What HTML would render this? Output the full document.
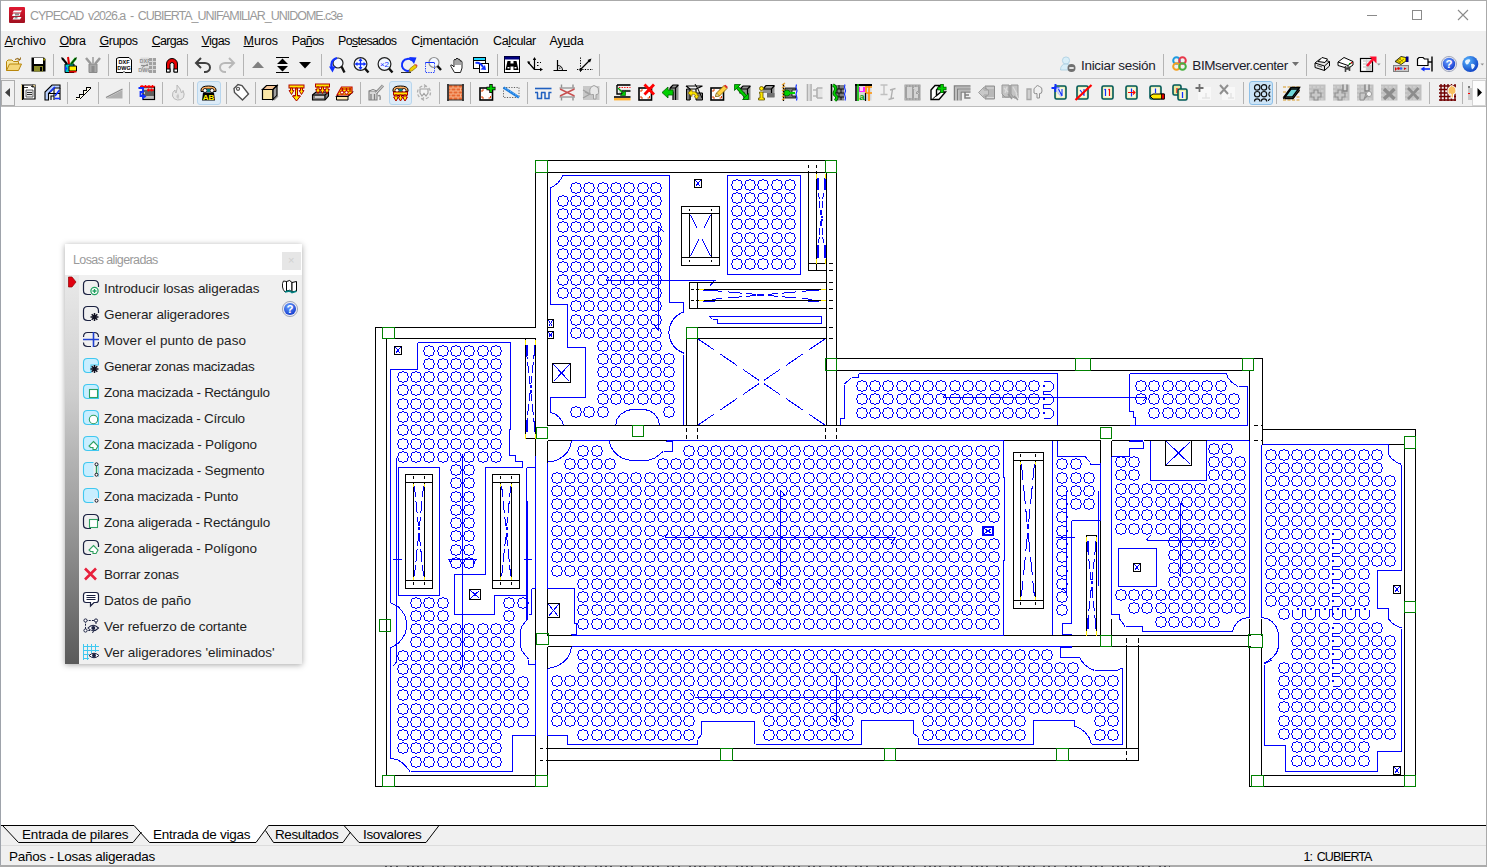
<!DOCTYPE html>
<html><head><meta charset="utf-8"><title>CYPECAD</title>
<style>
*{box-sizing:border-box;margin:0;padding:0}
html,body{width:1487px;height:867px;overflow:hidden;background:#fff}
body{font-family:"Liberation Sans",sans-serif;font-size:12px;color:#000;position:relative}
.abs{position:absolute}
#win{position:absolute;left:0;top:0;width:1487px;height:867px;background:#fff;overflow:hidden}
#bT{position:absolute;left:0;top:0;width:1487px;height:1px;background:#aaa}
#bL{position:absolute;left:0;top:0;width:1px;height:867px;background:#9ea3ab}
#bR{position:absolute;left:1486px;top:0;width:1px;height:867px;background:#aaa}
#title{position:absolute;left:1px;top:1px;width:1485px;height:30px;background:#fff}
#title .cap{position:absolute;left:29px;top:7px;font-size:12px;color:#999;white-space:nowrap;letter-spacing:-0.35px}
#menu{position:absolute;left:1px;top:31px;width:1485px;height:21px;background:#f0f0f0}
#menu span{position:absolute;top:3px;font-size:12.5px;white-space:nowrap;color:#000}
#menu u{text-decoration:underline;text-underline-offset:1px}
#tb1{position:absolute;left:1px;top:52px;width:1485px;height:27px;background:#f0f0f0;border-bottom:1px solid #c8c8c8}
#tb2{position:absolute;left:1px;top:79px;width:1485px;height:28px;background:#f0f0f0;border-bottom:1px solid #bcbcbc}
.sep{position:absolute;width:1px;background:#b4b4b4}
.ic{position:absolute;width:20px;height:20px;overflow:visible}
.hl{position:absolute;background:#dcebf7;border:1px solid #b8d6ee;border-radius:3px}
#canvas{position:absolute;left:1px;top:107px;width:1485px;height:718px;background:#fff}
#tabs{position:absolute;left:1px;top:825px;width:1485px;height:20px;background:#f0f0f0}
#status{position:absolute;left:1px;top:845px;width:1485px;height:20px;background:#f0f0f0}
#status span{position:absolute;top:4px;font-size:12.5px;white-space:nowrap}
#panel{position:absolute;left:65px;top:244px;width:237px;height:420px;background:#f0f0f0;box-shadow:0 1px 6px rgba(0,0,0,.35)}
#panel .ph{position:absolute;left:0;top:0;width:237px;height:31px;background:#fff}
#panel .ph span{position:absolute;left:8px;top:8px;font-size:12px;color:#9a9a9a;letter-spacing:-0.3px}
#panel .grip{position:absolute;left:0;top:31px;width:14px;height:389px;background:linear-gradient(#e9e9e9,#cfcfcf 30%,#8f8f8f 70%,#5a5a5a)}
#panel .it{position:absolute;left:39px;font-size:13px;color:#1a1a1a;white-space:nowrap;letter-spacing:-0.1px}
</style></head><body><div id="win">

<div id="bT"></div><div id="bL"></div><div id="bR"></div>
<div id="title"></div>
<span class="abs" style="left:30.0px;top:9.5px;font-size:12.5px;letter-spacing:-1.02px;color:#9a9a9a;white-space:nowrap;line-height:1;word-spacing:2.2px;">CYPECAD v2026.a - CUBIERTA_UNIFAMILIAR_UNIDOME.c3e</span>
<div id="menu"></div>
<span class="abs" style="left:4.5px;top:34.5px;font-size:12.5px;letter-spacing:-0.03px;color:#000;white-space:nowrap;line-height:1;"><u>A</u>rchivo</span>
<span class="abs" style="left:59.5px;top:34.5px;font-size:12.5px;letter-spacing:-0.45px;color:#000;white-space:nowrap;line-height:1;"><u>O</u>bra</span>
<span class="abs" style="left:99.5px;top:34.5px;font-size:12.5px;letter-spacing:-0.49px;color:#000;white-space:nowrap;line-height:1;"><u>G</u>rupos</span>
<span class="abs" style="left:151.8px;top:34.5px;font-size:12.5px;letter-spacing:-0.74px;color:#000;white-space:nowrap;line-height:1;"><u>C</u>argas</span>
<span class="abs" style="left:201.5px;top:34.5px;font-size:12.5px;letter-spacing:-0.56px;color:#000;white-space:nowrap;line-height:1;"><u>V</u>igas</span>
<span class="abs" style="left:243.5px;top:34.5px;font-size:12.5px;letter-spacing:-0.05px;color:#000;white-space:nowrap;line-height:1;"><u>M</u>uros</span>
<span class="abs" style="left:291.8px;top:34.5px;font-size:12.5px;letter-spacing:-0.72px;color:#000;white-space:nowrap;line-height:1;">Pa<u>ñ</u>os</span>
<span class="abs" style="left:338.0px;top:34.5px;font-size:12.5px;letter-spacing:-0.69px;color:#000;white-space:nowrap;line-height:1;">Po<u>s</u>tesados</span>
<span class="abs" style="left:411.2px;top:34.5px;font-size:12.5px;letter-spacing:-0.22px;color:#000;white-space:nowrap;line-height:1;">C<u>i</u>mentación</span>
<span class="abs" style="left:493.0px;top:34.5px;font-size:12.5px;letter-spacing:-0.38px;color:#000;white-space:nowrap;line-height:1;">Ca<u>l</u>cular</span>
<span class="abs" style="left:549.5px;top:34.5px;font-size:12.5px;letter-spacing:-0.29px;color:#000;white-space:nowrap;line-height:1;">Ay<u>u</u>da</span>
<div id="tb1"></div><div id="tb2"></div>
<div class="sep" style="left:53px;top:54px;height:22px"></div>
<div class="sep" style="left:108px;top:54px;height:22px"></div>
<div class="sep" style="left:187px;top:54px;height:22px"></div>
<div class="sep" style="left:243px;top:54px;height:22px"></div>
<div class="sep" style="left:321px;top:54px;height:22px"></div>
<div class="sep" style="left:497px;top:54px;height:22px"></div>
<div class="sep" style="left:599px;top:54px;height:22px"></div>
<div class="sep" style="left:1163px;top:54px;height:22px"></div>
<div class="sep" style="left:1306px;top:54px;height:22px"></div>
<div class="sep" style="left:1385px;top:54px;height:22px"></div>
<div class="sep" style="left:67px;top:82px;height:22px"></div>
<div class="sep" style="left:98px;top:82px;height:22px"></div>
<div class="sep" style="left:129px;top:82px;height:22px"></div>
<div class="sep" style="left:162px;top:82px;height:22px"></div>
<div class="sep" style="left:193px;top:82px;height:22px"></div>
<div class="sep" style="left:226px;top:82px;height:22px"></div>
<div class="sep" style="left:255px;top:82px;height:22px"></div>
<div class="sep" style="left:360px;top:82px;height:22px"></div>
<div class="sep" style="left:439px;top:82px;height:22px"></div>
<div class="sep" style="left:470px;top:82px;height:22px"></div>
<div class="sep" style="left:527px;top:82px;height:22px"></div>
<div class="sep" style="left:606px;top:82px;height:22px"></div>
<div class="sep" style="left:1243px;top:82px;height:22px"></div>
<div class="sep" style="left:1276px;top:82px;height:22px"></div>
<div class="sep" style="left:1429px;top:82px;height:22px"></div>
<div class="sep" style="left:1462px;top:82px;height:22px"></div>
<div class="hl" style="left:197px;top:81px;width:24px;height:24px;background:#dcebf7;border-color:#b8d6ee"></div>
<div class="hl" style="left:389px;top:81px;width:23px;height:24px;background:#dcebf7;border-color:#b8d6ee"></div>
<div class="hl" style="left:1249px;top:81px;width:24px;height:24px;background:#cce4f7;border-color:#8ec0e8"></div>
<div class="abs" style="left:1px;top:80px;width:14px;height:26px;background:#f1f1f1;border:1px solid #adadad"></div>
<div class="abs" style="left:1472px;top:80px;width:14px;height:26px;background:#fdfdfd;border:1px solid #d4d4d4"></div>
<span class="abs" style="left:1081.0px;top:58.5px;font-size:13.5px;letter-spacing:-0.31px;color:#1c1c2c;white-space:nowrap;line-height:1;">Iniciar sesión</span>
<span class="abs" style="left:1192.3px;top:58.5px;font-size:13.5px;letter-spacing:-0.41px;color:#1c1c2c;white-space:nowrap;line-height:1;">BIMserver.center</span>
<div id="canvas"></div>
<svg class="abs" style="left:0;top:0" width="1487" height="110" viewBox="0 0 1487 110" fill="none"><g transform="translate(6,57)" ><path d="M0.5 13.5 L0.5 4.5 L2 3 L6 3 L7.5 4.5 L12.5 4.5 L12.5 7" fill="#f7e7a0" stroke="#b8860b"/><path d="M0.5 13.5 L3.5 7 L15.5 7 L12.5 13.5 Z" fill="#f4d77a" stroke="#b8860b"/><path d="M9 2.5 Q12 0 14 3 M14 3 L14.5 0.5 M14 3 L11.5 3" fill="none" stroke="#8b5a00"/></g>
<g transform="translate(31,57)" ><path d="M0.5 0.5 H13 L14.5 2 V14.5 H0.5 Z" fill="#000"/><rect x="3" y="1" width="9" height="6" fill="#fff"/><rect x="3" y="9" width="9" height="5.5" fill="#8c8c2a"/><rect x="9" y="10" width="2" height="4" fill="#000"/><rect x="12.5" y="1.5" width="1.2" height="2" fill="#e8e000"/></g>
<g transform="translate(61,57)" ><path d="M4 7 H13 V15.5 H4 Z" fill="#00c8c8" stroke="#000"/><path d="M8 9 H15.5 V14 H8 Z" fill="#ffee00" stroke="#000"/><path d="M8 14 H15.5 V15.5 H8Z" fill="#e00000"/><path d="M1 1 L6 7" stroke="#000" stroke-width="2"/><path d="M7 0 L8 7" stroke="#e00000" stroke-width="2"/><path d="M15 1 L10 7" stroke="#00a000" stroke-width="2.5"/><path d="M0.5 0.5 L5.5 6.5 M15.5 0.5 L10.5 6.5" stroke="#000" fill="none"/><path d="M4 9 L6.5 11.5 L4 14Z" fill="#1030ff"/></g>
<g transform="translate(85,57)" ><path d="M4 7 H12 V15.5 H4 Z" fill="#a8a8a8" stroke="#8a8a8a"/><path d="M1 1 L6 7 M15 1 L10 7" stroke="#9a9a9a" stroke-width="2.5"/><path d="M8 0 L8 7" stroke="#b0b0b0" stroke-width="2"/><rect x="6.5" y="9" width="3" height="6" fill="#8c8c8c"/></g>
<g transform="translate(116,57)" ><path d="M0.5 1.5 L3 0.5 H13 L15.5 3 V15.5 H9 L8 14.5 L7 15.5 H0.5 Z" fill="#fff" stroke="#000"/><text x="8" y="7.3" font-family="Liberation Sans" font-weight="bold" font-size="5.5" text-anchor="middle" fill="#000" stroke="none">DXF</text><text x="8" y="12.8" font-family="Liberation Sans" font-weight="bold" font-size="5.5" text-anchor="middle" fill="#000">DWG</text></g>
<g transform="translate(140,57)" ><path d="M0.5 0.5 H9 V15.5 H0.5Z" fill="#dcdcdc" stroke="none"/><text x="5" y="6" font-family="Liberation Sans" font-weight="bold" font-size="5.5" text-anchor="middle" fill="#909090">DXF</text><text x="5" y="15" font-family="Liberation Sans" font-weight="bold" font-size="5.5" text-anchor="middle" fill="#909090">DWG</text><path d="M9 1 H16 V16 H9Z" fill="#a0a0a0"/><path d="M9 4.5 H16 M9 8.5 H16 M9 12.5 H16 M12.5 1 V16" stroke="#d8d8d8"/><path d="M1 8.5 H8 M2 10.5 L8 7" stroke="#909090"/></g>
<g transform="translate(165,57)" ><path d="M1.5 15 V7 A5.5 5.5 0 0 1 12.5 7 V15 H9 V7.5 A2 2 0 0 0 5 7.5 V15 Z" fill="#e80000" stroke="#000"/><rect x="1.5" y="12" width="3.5" height="3" fill="#fff" stroke="#000"/><rect x="9" y="12" width="3.5" height="3" fill="#fff" stroke="#000"/></g>
<g transform="translate(195,57)" ><path d="M1 6 H10 A5 4.5 0 0 1 10 15 H9" fill="none" stroke="#404040" stroke-width="2"/><path d="M6 1 L1 6 L6 11" fill="none" stroke="#404040" stroke-width="2"/></g>
<g transform="translate(219,57)" ><path d="M15 6 H6 A5 4.5 0 0 0 6 15 H7" fill="none" stroke="#b8b8b8" stroke-width="2"/><path d="M10 1 L15 6 L10 11" fill="none" stroke="#b8b8b8" stroke-width="2"/></g>
<g transform="translate(252,57)" ><path d="M0 11 L6 4.5 L12 11Z" fill="#808080"/></g>
<g transform="translate(276,57)" ><path d="M0 0.5 H13 M0 15.5 H13" stroke="#000" stroke-width="1"/><path d="M1 7 L6.5 1.5 L12 7Z M1 9 L6.5 14.5 L12 9Z" fill="#000"/></g>
<g transform="translate(299,57)" ><path d="M0 5 L6 11.5 L12 5Z" fill="#000"/></g>
<g transform="translate(329,57)" ><circle cx="9" cy="6" r="5" fill="#f4f8ff" stroke="#202020" stroke-width="1.2"/><path d="M12.5 9.5 L15.5 15.5" stroke="#101010" stroke-width="2.4"/><path d="M8 1 Q0.5 3 3 12" fill="none" stroke="#1030ff" stroke-width="2.2"/><path d="M0 9.5 L3.5 15.5 L6.5 9.5Z" fill="#1030ff"/></g>
<g transform="translate(353,57)" ><circle cx="7.5" cy="7" r="6.4" fill="#f4f8ff" stroke="#202020" stroke-width="1.2"/><path d="M11.98 11.48 L15.5 15.5" stroke="#101010" stroke-width="2.4"/><path d="M7.5 2.5 V11.5 M3 7 H12" stroke="#1030ff" stroke-width="1.3"/><path d="M7.5 1 L5.5 4 H9.5Z M7.5 13 L5.5 10 H9.5Z M1.5 7 L4.5 5 V9Z M13.5 7 L10.5 5 V9Z" fill="#1030ff"/></g>
<g transform="translate(377,57)" ><circle cx="7.5" cy="7" r="6.4" fill="#f4f8ff" stroke="#202020" stroke-width="1.2"/><path d="M11.98 11.48 L15.5 15.5" stroke="#101010" stroke-width="2.4"/><text x="7.5" y="9.8" font-family="Liberation Sans" font-size="8" text-anchor="middle" fill="#1030ff">×2</text></g>
<g transform="translate(401,57)" ><path d="M11 3.5 A6 6 0 1 0 12.5 10" fill="none" stroke="#1030ff" stroke-width="2"/><path d="M8 0 L15.5 0.5 L13 7Z" fill="#1030ff"/><path d="M0 15.5 H10" stroke="#303030"/><path d="M8 14.5 L9 11.5 L14 7.5 L16 10 L11 14 Z" fill="#f0d000" stroke="#806000" stroke-width=".6"/><path d="M14 7.5 L16 10 L16.5 8.5 L15 7Z" fill="#e04040"/></g>
<g transform="translate(425,57)" ><circle cx="9" cy="5.5" r="5" fill="#f4f8ff" stroke="#909090" stroke-width="1.2"/><path d="M12.5 9 L16 13" stroke="#101010" stroke-width="2.4"/><path d="M0.5 5.5 H9.5 V15.5 H0.5Z" fill="none" stroke="#1030ff" stroke-dasharray="1.2 1.2"/><path d="M0.5 5.5 H9.5" stroke="#1030ff"/></g>
<g transform="translate(450,57)" ><path d="M4.5 15.5 L1 9.5 Q0 7.5 2 8 L4 10 V3 Q5 1.5 6 3 V2 Q7 0 8 2 V2.5 Q9.2 1 10 3 V4 Q11.5 3 12 5 V11 L10.5 15.5Z" fill="#fff" stroke="#202020" stroke-width="1"/><path d="M6 3 V8 M8 2.5 V8 M10 3.5 V8" stroke="#202020" stroke-width=".8"/></g>
<g transform="translate(473,57)" ><rect x="0.5" y="0.5" width="12" height="11" fill="#fff" stroke="#000"/><rect x="0.5" y="0.5" width="12" height="3" fill="#20d8ff" stroke="#000"/><rect x="6.5" y="6.5" width="9" height="9" fill="#fff" stroke="#000"/><path d="M2.5 6 Q7 5 10 10" fill="none" stroke="#1030ff" stroke-width="2"/><path d="M7.5 12.5 L13 13 L12 8Z" fill="#1030ff"/></g>
<g transform="translate(504,56)" ><rect x="0.5" y="0.5" width="15" height="16" fill="#fff" stroke="#000"/><rect x="0.5" y="0.5" width="15" height="3" fill="#000080"/><path d="M3.5 5 H6.5 V7.5 H9.5 V5 H12.5 L14.5 14 H9.5 V10.5 H6.5 V14 H1.5Z" fill="#000"/><rect x="3.5" y="11" width="2" height="1.5" fill="#fff"/><rect x="10.5" y="11" width="2" height="1.5" fill="#fff"/></g>
<g transform="translate(527,57)" ><path d="M7.5 1.5 V12.5 H15 M7.5 12.5 L1 5" fill="none" stroke="#000" stroke-width="1.2"/><path d="M7.5 0 L5.8 3 H9.2Z M16 12.5 L13 10.8 V14.2Z M0.3 4.2 L3.4 4.8 L1.4 7.2Z" fill="#000"/><path d="M10 5.5 H14 M10 8.5 L13 8.5" stroke="#000" stroke-dasharray="1.5 1.5"/></g>
<g transform="translate(553,57)" ><path d="M0.5 13.5 H14 M4.5 3 V13.5" stroke="#000" stroke-width="1.2" fill="none"/><path d="M4.5 8.5 Q9.5 8.5 9.5 13.5" fill="none" stroke="#000"/><rect x="6.2" y="10.5" width="1.2" height="1.2" fill="#000"/></g>
<g transform="translate(577,57)" ><path d="M3.5 0.5 V16 M0 12.5 H16" stroke="#000" stroke-dasharray="1.3 1.3"/><path d="M3.5 12.5 L13 3" stroke="#000" stroke-width="1.2"/><path d="M14.5 1.5 L10.5 3 L13 5.5Z" fill="#000"/><rect x="2.5" y="11.5" width="2.4" height="2.4" fill="#000"/></g>
<g transform="translate(1060,56)" ><circle cx="6" cy="4.5" r="3.6" fill="#d8eef8" stroke="#a8cde0" stroke-width=".8"/><path d="M0.5 14 Q0.5 8 6 8 Q11.5 8 11.5 14Z" fill="#d8eef8" stroke="#a8cde0" stroke-width=".8"/><circle cx="11.5" cy="12" r="4" fill="#707070"/><rect x="9.3" y="11.2" width="4.4" height="1.6" fill="#fff"/></g>
<g transform="translate(1172,56)" ><g fill="none" stroke-width="2"><circle cx="4.5" cy="4.5" r="3.3" stroke="#1e9be0"/><circle cx="10.5" cy="4.5" r="3.3" stroke="#e8384a"/><circle cx="4.5" cy="10.5" r="3.3" stroke="#f4a020"/><circle cx="10.5" cy="10.5" r="3.3" stroke="#48b040"/></g></g>
<g transform="translate(1292,62)" ><path d="M0 0 H7 L3.5 4Z" fill="#707070"/></g>
<g transform="translate(1314,56)" ><path d="M1 7 L6 3 L15.5 5.5 L15.5 10 L10.5 14.5 L1 11.5Z" fill="#e8e8e8" stroke="#000"/><path d="M4 5.5 L8 1.5 L13.5 3 L11 6.5Z" fill="#fff" stroke="#000"/><path d="M1 7 L10.5 10 L15.5 5.5 M10.5 10 V14.5" fill="none" stroke="#000"/><path d="M3 9.5 L8 11" stroke="#606060"/></g>
<g transform="translate(1337,56)" ><path d="M1 6 L7 1.5 L16 5.5 L16 9 L11 12.5 L1 9.5Z" fill="#fff" stroke="#000"/><path d="M1 6 L11 9.5 L16 5.5 M11 9.5 V12.5" fill="none" stroke="#000"/><path d="M8.5 10 V16 M12.5 10.5 V15 M8.5 13 H12.5" stroke="#404040" stroke-width="1.6"/><rect x="12" y="7" width="1.5" height="1.5" fill="#00b000"/><rect x="13.8" y="6" width="1.5" height="1.5" fill="#e00000"/></g>
<g transform="translate(1360,56)" ><rect x="0.5" y="2.5" width="12" height="13" fill="#fff" stroke="#000" stroke-width="1.2"/><path d="M3 5 H10 M3 8 H10 M3 11 H10 M6.5 3 V15" stroke="#d0d0d0" stroke-width="1.4"/><rect x="6.5" y="9" width="5" height="6" fill="#c8c8c8"/><path d="M7 10 L14 2" stroke="#ff1030" stroke-width="2.6"/><path d="M9.5 0.5 H16.5 V7.5Z" fill="#ff1030"/></g>
<g transform="translate(1377,63.5)" ><path d="M0 0 H3.6 L1.8 2Z" fill="#909090"/></g>
<g transform="translate(1393,56)" ><rect x="0.5" y="9.5" width="15" height="6" fill="#c8c8c8" stroke="#808080"/><path d="M2 11 l2 2 l-2 2Z" fill="#e00000"/><circle cx="8" cy="12.5" r="1.3" fill="#3060ff"/><circle cx="5.5" cy="12.5" r="1.3" fill="#e00000"/><path d="M11 11.5 l2.5 1 l-2.5 1.5Z" fill="#e00000"/><path d="M2 5.5 L8 0.5 L13 1.5 L13 5 L8 8.5 Z" fill="#fff000" stroke="#000" stroke-width=".8"/><path d="M4 4 L8 7 M6 2.5 L10 5.5 M3 6 L8 2 M5.5 7 L11 3" stroke="#806000" stroke-width=".7"/><rect x="13" y="0.5" width="2.5" height="5.5" fill="#000080"/></g>
<g transform="translate(1417,56)" ><path d="M0.5 9.5 V3 L2 1.5 H6 L7.5 3 H11 V9.5Z" fill="#fff" stroke="#000" stroke-width="1.2"/><path d="M15 0.5 V15.5" stroke="#000" stroke-width="1.4"/><path d="M11 6 H15" stroke="#000" stroke-width="1.4"/><path d="M5 13 H13" stroke="#1030ff" stroke-width="1.6"/><path d="M3.5 13 L7.5 10.5 V15.5Z" fill="#1030ff"/></g>
<g transform="translate(1441,56)" ><defs><radialGradient id="hg" cx=".4" cy=".3" r=".8"><stop offset="0" stop-color="#6aa0ff"/><stop offset="1" stop-color="#0a30c8"/></radialGradient></defs><circle cx="8" cy="8" r="7.6" fill="#e8e8f0" stroke="#9098b0" stroke-width=".8"/><circle cx="8" cy="8" r="6.2" fill="url(#hg)"/><text x="8" y="12.2" font-family="Liberation Sans" font-weight="bold" font-size="11.5" text-anchor="middle" fill="#fff">?</text></g>
<g transform="translate(1462,56)" ><defs><radialGradient id="gg" cx=".35" cy=".3" r=".8"><stop offset="0" stop-color="#58b8ff"/><stop offset="1" stop-color="#0838c0"/></radialGradient></defs><circle cx="8.3" cy="8" r="8" fill="url(#gg)"/><path d="M3 5 Q5 2.5 8 3.5 Q9 5 7 6.5 Q6.5 9 4.5 8.5 Q3 7 3 5Z M9 8 Q12 7 13 9.5 Q12 13 10 13.5 Q9 11 9 8Z" fill="#e8f4ff"/></g>
<g transform="translate(1480.5,63.5)" ><path d="M0 0 H3.6 L1.8 2Z" fill="#909090"/></g>
<g transform="translate(5,88)" ><path d="M5 0 V9 L0 4.5Z" fill="#404040"/></g>
<g transform="translate(1477.5,88)" ><path d="M0 0 L4.5 4.5 L0 9Z" fill="#000"/></g>
<g transform="translate(20,84)" ><path d="M3.5 1 H15 V15 H3.5Z" fill="#fff" stroke="#000" stroke-width="1.2"/><path d="M2 0.5 V16" stroke="#000" stroke-width="2"/><path d="M1.5 0.5 V16" stroke="#f0d890" stroke-width="1"/><path d="M6 6 H13 V13 H6Z" fill="#e8e8e8" stroke="#404040" stroke-width=".8"/><path d="M7 8.5 H12 M7 10.5 H12" stroke="#000" stroke-width=".8"/><path d="M3.5 3.5 H8 M13 0.5 V4 M11 2.5 H15" stroke="#000" stroke-width=".8"/><path d="M13.5 1 L15 2.5" stroke="#f0d890" stroke-width="1.5"/></g>
<g transform="translate(44,84)" ><path d="M1 16 V8 L8 1 H16 V4 H10 L4.5 9.5 V16Z" fill="#b8d0ff" stroke="#000" stroke-width="1.1"/><path d="M4.5 9.5 H16 M10 4 V16 M16 4 V16 M7 16 V12 H10" fill="none" stroke="#000" stroke-width="1.1"/><path d="M6 8 L11 3 M11 12 L15.5 6" stroke="#1030ff" stroke-width="1.6"/><path d="M10.5 14.5 H16" stroke="#1030ff" stroke-width="1.6"/></g>
<g transform="translate(75,84)"  shape-rendering="crispEdges"><path d="M0.5 15.5 V13.5 H4.5 V10 H8 V6.5 H11.5 V3 H15.5 V4.5 L4.5 15.5Z" fill="#fffbe8" stroke="none"/><path d="M0.5 15 H2 M0.5 13.5 H4.5 V10 H8 V6.5 H11.5 V3 H15.5 M4.5 15.5 L15.5 4.5" fill="none" stroke="#000" stroke-width="1"/></g>
<g transform="translate(106,84)" ><path d="M0 14.5 L16.5 6 V14.5Z" fill="#b0b0b0"/><path d="M0 13.5 L16.5 5" stroke="#888" stroke-width="1.3"/></g>
<g transform="translate(138,84)" ><rect x="5" y="3" width="11.5" height="12.5" fill="#c0c0c0" stroke="#000" stroke-width="1.2"/><path d="M5 7 H16.5 M5 11 H16.5" stroke="#000" stroke-width="1.2"/><rect x="7" y="8" width="9" height="2.4" fill="#606060"/><path d="M2 2.5 H16.5 M9 6 H16" stroke="#ff0000" stroke-width="1.3"/><path d="M4 1 V4 M7.5 1 V4 M11 1 V4 M14.5 1 V4 M10.5 4.5 V7.5 M13.5 4.5 V7.5" stroke="#ff0000" stroke-width="1.2"/><path d="M0.5 4 H5 V8 H2.5 V12 H5" fill="none" stroke="#1030ff" stroke-width="1.8"/><path d="M4 9.5 L8.5 12.5 L4 15.5Z" fill="#1030ff"/></g>
<g transform="translate(171,84)" ><path d="M6 1 Q10 5 10.5 9 Q12 8 12 6.5 Q14 10 12.5 13.5 Q10 16.5 6.5 16 Q2.5 15.5 1.5 12 Q1 8 4 6 Q4 8 5 9 Q6.5 5 6 1Z" fill="#e8e8e8" stroke="#b8b8b8" stroke-width="1"/><path d="M7 9 Q9 12 7.5 15 Q5 14 5.5 11.5 Q6.5 11 7 9Z" fill="#c8c8c8"/></g>
<g transform="translate(200,84)" ><path d="M1 6 Q1 2 8.5 2 Q16 2 16 6 L16 7.5 L12 7.5 L11.5 5 H5.5 L5 7.5 L1 7.5Z" fill="#ffb060" stroke="#000" stroke-width="1"/><circle cx="5" cy="6.5" r="2" fill="#fff" stroke="#000" stroke-width=".8"/><circle cx="12" cy="6.5" r="2" fill="#fff" stroke="#000" stroke-width=".8"/><path d="M7 5 H10 V8 H7Z" fill="#008080"/><path d="M3 8.5 H14 L15 16.5 H2Z" fill="#000"/><text x="8.5" y="15.5" font-family="Liberation Sans" font-weight="bold" font-size="8" text-anchor="middle" fill="#fff000">AB</text></g>
<g transform="translate(233,84)" ><path d="M1 4.5 L5 0.5 L9 1.5 L15.5 10 L9.5 16 L1.5 8.5Z" fill="#fff" stroke="#505050" stroke-width="1.4"/><circle cx="5" cy="4.8" r="1.6" fill="#f0f0f0" stroke="#505050" stroke-width="1.1"/></g>
<g transform="translate(262,84)" ><path d="M0.5 5.5 H11 V15.5 H0.5Z" fill="#fbe8a8" stroke="#000" stroke-width="1.2"/><path d="M0.5 5.5 L4.5 1.5 H15 L11 5.5Z" fill="#f8c898" stroke="#000" stroke-width="1.2"/><path d="M11 5.5 L15 1.5 V11.5 L11 15.5Z" fill="#a0a0a0" stroke="#000" stroke-width="1.2"/><path d="M12 16 L16 12" stroke="#909090" stroke-width="1.2"/></g>
<g transform="translate(288,84)" ><rect x="1.0" y="1.0" width="15.0" height="3" fill="#ffe800" stroke="#b00000" stroke-width="1"/><path d="M2.5 4.0 V6.5 H1.1 L3.5 10.5 L5.9 6.5 H4.5 V4.0 Z" fill="#ffe800" stroke="#b00000" stroke-width="1"/><path d="M7.5 4.0 V11.5 H5.3 L8.5 15.5 L11.7 11.5 H9.5 V4.0 Z" fill="#ffe800" stroke="#b00000" stroke-width="1"/><path d="M12.5 4.0 V6.5 H11.1 L13.5 10.5 L15.9 6.5 H14.5 V4.0 Z" fill="#ffe800" stroke="#b00000" stroke-width="1"/><path d="M7.5 5 V12 H4.5 L8.5 17 L12.5 12 H9.5 V5Z" fill="#ffe800" stroke="#b00000"/></g>
<g transform="translate(312,84)" ><path d="M0.5 11 L4 8 H16.5 V12 L13 16 H0.5Z" fill="#808080" stroke="#000" stroke-width="1.1"/><path d="M0.5 11 H13 L16.5 8 M13 11 V16" fill="none" stroke="#000" stroke-width="1.1"/><path d="M3 13 H12" stroke="#d0d0d0" stroke-width="2"/><rect x="3.5" y="0.0" width="14.0" height="3" fill="#ffe800" stroke="#b00000" stroke-width="1"/><path d="M5.0 3.0 V5.5 H3.6 L6.0 9.5 L8.4 5.5 H7.0 V3.0 Z" fill="#ffe800" stroke="#b00000" stroke-width="1"/><path d="M9.5 3.0 V5.5 H8.1 L10.5 9.5 L12.9 5.5 H11.5 V3.0 Z" fill="#ffe800" stroke="#b00000" stroke-width="1"/><path d="M14.0 3.0 V5.5 H12.6 L15.0 9.5 L17.4 5.5 H16.0 V3.0 Z" fill="#ffe800" stroke="#b00000" stroke-width="1"/></g>
<g transform="translate(336,84)" ><path d="M0.5 12.5 L5 8 H16.5 L12 12.5Z" fill="#d8d8d8" stroke="#000" stroke-width="1.1"/><path d="M0.5 12.5 H12 V16 H0.5Z" fill="#ffe8b0" stroke="#000" stroke-width="1"/><path d="M1 11 L5.5 3 H16 V9 L12 11Z" fill="#ffe800" stroke="#c00000" stroke-width="1.2"/><path d="M5 5 H15 M3.5 8 H13" stroke="#c00000" stroke-width="1.2"/><path d="M6.5 4 V10 M10.5 4 V10 M14 3.5 V8" stroke="#c00000" stroke-width="1.3"/><circle cx="6" cy="8.5" r="1.6" fill="#fff" stroke="#c00000"/><circle cx="10.5" cy="8.5" r="1.6" fill="#fff" stroke="#c00000"/></g>
<g transform="translate(367,84)" ><path d="M2 7 H10 V16 H2Z" fill="#d8d8d8" stroke="#808080" stroke-width="1.1"/><path d="M2 7 Q6 4 10 7" fill="#e8e8e8" stroke="#808080"/><path d="M4 10 V16 M7.5 10 V16" stroke="#808080" stroke-width="1.3"/><path d="M9 9 L16 1.5" stroke="#909090" stroke-width="3"/><path d="M9 9 L16 1.5" stroke="#e0e0e0" stroke-width="1"/><path d="M11 12 Q14 10 13 16" fill="none" stroke="#909090" stroke-width="1.4"/></g>
<g transform="translate(392,84)" ><path d="M1 6 Q1 2 8.5 2 Q16 2 16 6 L16 7.5 L12 7.5 L11.5 5 H5.5 L5 7.5 L1 7.5Z" fill="#ffb060" stroke="#000" stroke-width="1"/><circle cx="5" cy="6.5" r="2" fill="#fff" stroke="#000" stroke-width=".8"/><circle cx="12" cy="6.5" r="2" fill="#fff" stroke="#000" stroke-width=".8"/><path d="M7 5 H10 V8 H7Z" fill="#008080"/><path d="M3 8.5 H14 L15 12 H2Z" fill="#000"/><rect x="1.5" y="8.0" width="14.0" height="3" fill="#ffe800" stroke="#b00000" stroke-width="1"/><path d="M3.0 11.0 V13.0 H1.6 L4.0 17.0 L6.4 13.0 H5.0 V11.0 Z" fill="#ffe800" stroke="#b00000" stroke-width="1"/><path d="M7.5 11.0 V13.0 H6.1 L8.5 17.0 L10.9 13.0 H9.5 V11.0 Z" fill="#ffe800" stroke="#b00000" stroke-width="1"/><path d="M12.0 11.0 V13.0 H10.6 L13.0 17.0 L15.4 13.0 H14.0 V11.0 Z" fill="#ffe800" stroke="#b00000" stroke-width="1"/></g>
<g transform="translate(416,84)" ><circle cx="8" cy="8.5" r="6.5" fill="none" stroke="#b0b0b0" stroke-width="1.3" stroke-dasharray="3 2"/><path d="M4 5 H12 V9 L10 12 L8 9.5 L6 12 L4 9Z" fill="#f4f4f4" stroke="#a0a0a0" stroke-width="1.1"/><path d="M8 0.5 L10 2 L8 3.5 M8 16.5 L6 15 L8 13.5" fill="none" stroke="#b0b0b0" stroke-width="1.1"/></g>
<g transform="translate(447,84)" ><rect x="1.5" y="1" width="14" height="15" fill="#e86830"/><path d="M1.5 4 H15.5 M1.5 7 H15.5 M1.5 10 H15.5 M1.5 13 H15.5" stroke="#f8b890" stroke-width=".9"/><path d="M6 1 V4 M11 1 V4 M4 4 V7 M9 4 V7 M13.5 4 V7 M6 7 V10 M11 7 V10 M4 10 V13 M9 10 V13 M13.5 10 V13 M6 13 V16 M11 13 V16" stroke="#f8b890" stroke-width=".9"/><path d="M1 0 V17 M16 0 V17" stroke="#303030" stroke-width="1.8"/><path d="M0 1 H17 M0 16 H17" stroke="#303030" stroke-width="1.2"/></g>
<g transform="translate(479,84)" ><rect x="1" y="4" width="12.5" height="12" fill="#fff" stroke="#000" stroke-width="1.6"/><path d="M3 8 V6 H5 M11.5 8 V6 H9.5 M3 12 V14 H5 M11.5 12 V14 H9.5" fill="none" stroke="#e04000" stroke-width="1"/><path d="M12 0 V9 M7.5 4.5 H16.5" stroke="#000" stroke-width="3.4"/><path d="M12 0.7 V8.3 M8.2 4.5 H15.8" stroke="#00d000" stroke-width="1.8"/></g>
<g transform="translate(503,84)" ><path d="M0.5 3.5 H16 V13.5 H0.5Z" fill="none" stroke="#606060" stroke-dasharray="1.2 1.4"/><path d="M0.5 3.5 L16 13.5" stroke="#2080e0" stroke-width="2.6"/><path d="M2 4 L16 13" stroke="#60b0ff" stroke-width="1" stroke-dasharray="1.5 1.5"/></g>
<g transform="translate(535,84)" ><path d="M0 4.5 H16.5" stroke="#2060c0" stroke-width="1.6"/><path d="M2.5 8.5 V14.5 H6.5 V8.5 M10 8.5 V14.5 H14 V8.5" fill="none" stroke="#2060c0" stroke-width="1.5"/><path d="M0 8.5 H3 M6 8.5 H10.5 M13.5 8.5 H16.5" stroke="#2060c0" stroke-width="1.5"/></g>
<g transform="translate(559,84)" ><path d="M2.5 0.5 V4 M14 0.5 V4 M2.5 13 V16.5 M14 13 V16.5" stroke="#909090" stroke-width="1.4"/><path d="M0.5 4 H16 M0.5 13 H16" stroke="#a0a0a0" stroke-width="1.4"/><path d="M1 5 L15.5 12 M15.5 5 L1 12" stroke="#c85050" stroke-width="1.4"/></g>
<g transform="translate(583,84)" ><rect x="0" y="2" width="16.5" height="14" fill="#c8c8c8"/><path d="M0 6 L7 10 L0 14 M2 8 L6 10" stroke="#a0a0a0" stroke-width="1.2" fill="none"/><path d="M7 10 Q6 4 9 2.5 Q11 0.5 13 2.5 Q16 3 15.5 7 Q16 11 13 10.5 V15 H10.5 V10.5 Q8 11 7 10Z" fill="#e8e8e8" stroke="#a0a0a0"/></g>
<g transform="translate(614,84)" ><path d="M3 1 H16.5" stroke="#000" stroke-width="1.6"/><path d="M3 1 V10 H8 V7 H16.5" fill="none" stroke="#000" stroke-width="1.4"/><path d="M5 3.5 H16.5" stroke="#ff0000" stroke-dasharray="1.3 1.3" stroke-width="1.2"/><path d="M5 5.5 H16 V6 H7 V9 H5Z" fill="#d0d0d0"/><path d="M0 13 H16.5" stroke="#000" stroke-width="1.6"/><path d="M0 15.2 H16.5" stroke="#ffb030" stroke-width="2.4"/><path d="M4 4 L10 10" stroke="#00a000" stroke-width="1.4"/><path d="M6.5 11.5 H11.5 V6.5Z" fill="#00d000" stroke="#006000" stroke-width=".7"/></g>
<g transform="translate(638,84)" ><rect x="1" y="4" width="12.5" height="12" fill="#fff" stroke="#000" stroke-width="1.6"/><path d="M3 8 V6 H5 M11.5 8 V6 H9.5 M3 12 V14 H5 M11.5 12 V14 H9.5" fill="none" stroke="#e04000" stroke-width="1"/><path d="M6.5 0.5 L16 10.5 M16 0.5 L6.5 10.5" stroke="#ff0000" stroke-width="2.8"/></g>
<g transform="translate(662,84)" ><path d="M8 4 L11 1 H16.5 V16 H11 V8 H8Z" fill="#909090"/><path d="M8 4 L11 1 H16.5 M8 4 H13.5 L16.5 1 M13.5 4 V16 M8 4 V8 H11 V16" fill="none" stroke="#000" stroke-width="1.2"/><path d="M0 8.5 L6 3 V6 H11 V11 H6 V14Z" fill="#00d000" stroke="#006000" stroke-width=".8"/></g>
<g transform="translate(686,84)" ><path d="M0 2 H16.5 M0 2 L4 5 H10 L16.5 2 M4 5 V16 M10 5 V9" fill="none" stroke="#000" stroke-width="1.2"/><path d="M0.5 5 H4 V16 H0.5Z M10 9 H16.5 V16 H10Z" fill="#808080" stroke="#000"/><path d="M9 0 L12 5 L16 14" stroke="#000" stroke-width="1"/><path d="M2 9 L6 5.5 V7.8 Q11 7 11.5 11.5 L13 11 L11 15 L8 12.5 L9.5 12 Q9 9.5 6 10.2 V12.5Z" fill="#ffe800" stroke="#806000" stroke-width=".7"/></g>
<g transform="translate(710,84)" ><rect x="1" y="4" width="12.5" height="12" fill="#fff" stroke="#000" stroke-width="1.6"/><path d="M3 8 V6 H5 M11.5 8 V6 H9.5 M3 12 V14 H5 M11.5 12 V14 H9.5" fill="none" stroke="#e04000" stroke-width="1"/><path d="M5.5 12.5 L6.5 9 L14 1.5 L17 4.5 L9.5 12 Z" fill="#ffd040" stroke="#806000" stroke-width=".8"/><path d="M14 1.5 L17 4.5 L17.8 3 L15.5 0.8Z" fill="#e02020"/><path d="M5.5 12.5 L6.5 9 L9.5 12Z" fill="#f8e8c0" stroke="#806000" stroke-width=".6"/></g>
<g transform="translate(734,84)" ><path d="M6 5 L9 2 H16.5 V16 H10 V9 H6Z" fill="#909090"/><path d="M6 5 L9 2 H16.5 M6 5 H13.5 L16.5 2 M13.5 5 V16 M6 5 V9 H10 V16" fill="none" stroke="#000" stroke-width="1.2"/><path d="M2 2 L13 14" stroke="#006000" stroke-width="3.4"/><path d="M2 2 L13 14" stroke="#00d000" stroke-width="2"/><path d="M0.5 0.5 H6.5 L0.5 6.5Z M14.5 15.5 H8.5 L14.5 9.5Z" fill="#00d000" stroke="#006000" stroke-width=".8"/></g>
<g transform="translate(758,84)" ><path d="M5 5 L8 1.5 H16.5 V13 H9 V9 H5Z" fill="#909090"/><path d="M5 5 L8 1.5 H16.5 M5 5 H13.5 L16.5 1.5 M13.5 5 V13" fill="none" stroke="#000" stroke-width="1.2"/><path d="M9 9 H16.5 V13.5 H9Z" fill="#707070"/><circle cx="3.5" cy="4.5" r="2" fill="#ffe800" stroke="#605000" stroke-width=".8"/><path d="M1.5 8 H5 V14 H6.5 V16 H0.5 V14 H2 V9.5 H1.5Z" fill="#ffe800" stroke="#605000" stroke-width=".8"/></g>
<g transform="translate(782,84)" ><path d="M1.5 0 V17" stroke="#000" stroke-width="1.2"/><path d="M0 1 L3 -1 M0 4 L3 2 M0 7 L3 5 M0 10 L3 8 M0 13 L3 11 M0 16 L3 14" stroke="#e8a030" stroke-width="1.5"/><path d="M3 4 H14 V6 H10 V12 H14 V14 H3Z" fill="#707070" stroke="#000" stroke-width=".8"/><path d="M14.5 0.5 Q13.5 3 14.5 5 Q15.5 7 14.5 8.5 Q13.5 10 14.5 12 Q15.5 14 14.5 16.5" fill="none" stroke="#1030ff" stroke-width="1.2"/><circle cx="5" cy="9" r="3" fill="#00d000" stroke="#006000" stroke-width=".8"/><path d="M7 9 H13" stroke="#00d000" stroke-width="2.2"/></g>
<g transform="translate(806,84)" ><path d="M1.5 0 V17 M5 0 V17" stroke="#b0b0b0" stroke-width="1.6"/><path d="M2.3 0 H4.2 V17 H2.3Z" fill="#d8d8d8"/><path d="M7 6 H11 M7 12 H11" stroke="#b8b8b8" stroke-width="1.4"/><path d="M11 4 H16.5 M11 14 H16.5 M11 4 V14" fill="none" stroke="#b0b0b0" stroke-width="1.6"/><rect x="12" y="5" width="4.5" height="8" fill="#e4e4e4"/></g>
<g transform="translate(830,84)" ><path d="M1.5 0 V17" stroke="#000" stroke-width="1.6"/><rect x="5" y="1" width="9" height="15.5" fill="#808080"/><path d="M5 5 H14 M5 9 H14 M5 13 H14 M9 1 V5 M7 5 V9 M11 5 V9 M9 9 V13 M7 13 V16 M11 13 V16" stroke="#000" stroke-width=".9"/><path d="M15 0.5 Q14 3 15 5 Q16 7 15 8.5 Q14 10 15 12 Q16 14 15 16.5" fill="none" stroke="#1030ff" stroke-width="1.2"/><path d="M3 1 Q7 3 5 7 Q3 10 6 12 Q8 14 5 16.5" fill="none" stroke="#006000" stroke-width="3.2"/><path d="M3 1 Q7 3 5 7 Q3 10 6 12 Q8 14 5 16.5" fill="none" stroke="#00d000" stroke-width="1.6"/></g>
<g transform="translate(855,84)" ><rect x="0.5" y="0.5" width="16" height="16" fill="#d8d8d8"/><path d="M0 1 H17" stroke="#000" stroke-width="2"/><path d="M1 0 V17" stroke="#000" stroke-width="1.6"/><rect x="4" y="3" width="6" height="5" fill="#ff20ff"/><rect x="5" y="3" width="3" height="4" fill="#ffd0ff"/><path d="M3 0 V17" stroke="#00c000" stroke-width="1.6"/><text x="7" y="15.5" font-family="Liberation Sans" font-weight="bold" font-size="9.5" text-anchor="middle" fill="#00a000">a</text><path d="M11 3 H17 M11 9 H17 M14 2 V17 M11 2 V9" stroke="#ff9000" stroke-width="1.6"/><path d="M10.5 9 V17" stroke="#000" stroke-width="1.2"/></g>
<g transform="translate(880,84)" ><path d="M0.5 1 H7.5 M4 1 V10.5 M0.5 10.5 H7.5" fill="none" stroke="#c0c0c0" stroke-width="1.4"/><path d="M10 6 L15.5 4.5 M12.5 5.5 L11 14.5 M8.5 15.5 L14 14" fill="none" stroke="#b0b0b0" stroke-width="1.4"/></g>
<g transform="translate(904,84)" ><rect x="0.5" y="0.5" width="16" height="16" fill="#a0a0a0"/><path d="M3 3 H8 V14 H3Z M10 3 H14 V7 H12 V10 H14 V14 H10Z" fill="#d4d4d4"/><path d="M0.5 2 H16.5 M0.5 15 H16.5" stroke="#b8b8b8" stroke-dasharray="1.5 1.5" stroke-width="1.4"/><path d="M9 4 L15 10" stroke="#c8c8c8"/></g>
<g transform="translate(930,84)" ><path d="M1 6 L5 1.5 H10 L6.5 6 V11.5 L11 8 H15.5 L9 15.5 H1Z" fill="#fff" stroke="#000" stroke-width="1.4"/><path d="M6.5 11.5 L2.5 15" stroke="#000" stroke-width="1"/><path d="M12 0 V9 M7.5 4.5 H16.5" stroke="#006000" stroke-width="3.6"/><path d="M12 0.7 V8.3 M8.2 4.5 H15.8" stroke="#00d000" stroke-width="2"/></g>
<g transform="translate(954,84)" ><path d="M0.5 16.5 V2 H16.5 M3.5 16.5 V5 H16.5 M7 16.5 V8 H11 M16.5 8 H11 V14 H16.5 M11 11 H15" fill="none" stroke="#808080" stroke-width="1.5"/><path d="M1.2 16.5 V2.8 H16.5 V4.3 H2.8 V16.5Z M4.3 16.5 V5.8 H16.5 V7.2 H6.3 V16.5Z" fill="#b8b8b8"/></g>
<g transform="translate(978,84)" ><path d="M7 2 H16.5 V15 H7 V12 H9 V5 H7Z" fill="#b8b8b8" stroke="#909090"/><path d="M0.5 8.5 L6 3 V6 H10.5 V11 H6 V14Z" fill="#c8c8c8" stroke="#a0a0a0"/><path d="M9 4 H16 M9 13.5 H16" stroke="#d8d8d8"/></g>
<g transform="translate(1002,84)" ><rect x="0" y="1" width="16" height="13" fill="#b0b0b0"/><path d="M0 1 V10 L3 13 H7 V1Z M9 1 V10 L12 14 H16 V1Z" fill="#c4c4c4" stroke="#989898"/><path d="M2 4 L6 8 M5 3 L3 9 M11 3 L15 10 M14 9 L16 15" stroke="#dcdcdc" stroke-width="1.2"/><path d="M6 10 L10 15 M12 12 L16 16" stroke="#989898" stroke-width="1.4"/></g>
<g transform="translate(1026,84)" ><path d="M1 5 H5 V15.5 H1Z" fill="#d0d0d0" stroke="#a8a8a8" stroke-width="1.3"/><path d="M8 9 Q7 4 10 2.5 Q11.5 0.5 13.5 2.5 Q16.5 3 16 7 Q16 10 13.5 9.5 V14 H11 V9.5 Q9 10 8 9Z" fill="#f0f0f0" stroke="#909090"/></g>
<g transform="translate(1051,84)" ><rect x="4" y="2" width="11" height="13" rx="1.5" fill="#e8e8a0" stroke="#005858" stroke-width="1.6"/><path d="M7 5 V9 L10 12 V13" fill="none" stroke="#1030ff" stroke-width="1.2"/><path d="M4.5 0 V8 M0.5 4 H8.5" stroke="#1030ff" stroke-width="2"/><rect x="5.5" y="3.5" width="8" height="10" fill="#fff" opacity=".7"/><path d="M7.5 5 L11 12 M11 5 V12" stroke="#1030ff" stroke-width="1.1"/></g>
<g transform="translate(1075,84)" ><rect x="2" y="2" width="11" height="13" rx="1.5" fill="#e8e8a0" stroke="#005858" stroke-width="1.6"/><rect x="3.5" y="3.5" width="8" height="10" fill="#fff" opacity=".7"/><path d="M5 6 L9 11 M9 5 V12" stroke="#1030ff" stroke-width="1.1"/><path d="M0.5 16 L16.5 1" stroke="#ff0000" stroke-width="2.2"/></g>
<g transform="translate(1100,84)" ><rect x="2" y="2" width="11" height="13" rx="1.5" fill="#e8e8a0" stroke="#005858" stroke-width="1.6"/><rect x="3.5" y="3.5" width="8" height="10" fill="#fff" opacity=".7"/><path d="M5.5 5 V12 M4.5 6 L5.5 5" stroke="#1030ff" stroke-width="1.2" fill="none"/><path d="M9.5 5 V12 M8.5 6 L9.5 5" stroke="#ff0000" stroke-width="1.2" fill="none"/></g>
<g transform="translate(1124,84)" ><rect x="2" y="2" width="11" height="13" rx="1.5" fill="#e8e8a0" stroke="#005858" stroke-width="1.6"/><rect x="3.5" y="3.5" width="8" height="10" fill="#fff" opacity=".7"/><path d="M7.5 4.5 V12.5" stroke="#1030ff" stroke-width="1.2"/><path d="M4 8.5 H11 M9 6.5 L11 8.5 L9 10.5" stroke="#ff0000" stroke-width="1.1" fill="none"/></g>
<g transform="translate(1148,84)" ><rect x="2" y="2" width="11" height="13" rx="1.5" fill="#e8e8a0" stroke="#005858" stroke-width="1.6"/><rect x="3.5" y="3.5" width="8" height="7" fill="#fff" opacity=".7"/><path d="M7.5 4.5 V9" stroke="#1030ff" stroke-width="1.2"/><path d="M2 12 L5 10 H16 V15 H5Z" fill="#ffe800" stroke="#000" stroke-width="1"/><rect x="13.5" y="10" width="3" height="5" fill="#e00000" stroke="#000" stroke-width=".8"/></g>
<g transform="translate(1172,84)" ><rect x="1" y="1" width="8" height="10" rx="1.5" fill="#e8e8a0" stroke="#005858" stroke-width="1.6"/><path d="M5 4 V9" stroke="#ff0000" stroke-width="1.2"/><rect x="6" y="5" width="9" height="11" rx="1.5" fill="#e8e8a0" stroke="#005858" stroke-width="1.6"/><path d="M10.5 8 V14" stroke="#1030ff" stroke-width="1.2"/><rect x="8" y="7" width="5" height="8" fill="#fff" opacity=".6"/><path d="M10.5 8 V14" stroke="#1030ff" stroke-width="1.2"/></g>
<g transform="translate(1195,84)" ><rect x="3" y="3" width="13" height="13" fill="#f8f8f8"/><path d="M4.5 0 V8 M0.5 4 H8.5" stroke="#707070" stroke-width="1.8"/><path d="M7 14 H15 M11 9 V14" stroke="#e4e4e4" stroke-width="1.5"/></g>
<g transform="translate(1219,84)" ><rect x="3" y="3" width="13" height="13" fill="#f8f8f8"/><path d="M1 1 L9 10 M9 1 L1 10" stroke="#909090" stroke-width="2"/><path d="M9 14 H15 M12 9 V14" stroke="#e4e4e4" stroke-width="1.5"/></g>
<g transform="translate(1254,84)" ><g fill="none" stroke="#101010" stroke-width="1.2"><circle cx="3.2" cy="3.4" r="2.7"/><circle cx="10" cy="3.4" r="2.7"/><circle cx="3.2" cy="10.2" r="2.7"/><circle cx="10" cy="10.2" r="2.7"/><path d="M0.5 17.5 A2.7 2.7 0 0 1 5.9 17.5 M7.3 17.5 A2.7 2.7 0 0 1 12.7 17.5"/><path d="M16.3 1 A2.7 2.7 0 0 0 16.3 5.8 M16.3 7.8 A2.7 2.7 0 0 0 16.3 12.6 M14.3 17 A2.7 2.7 0 0 1 16.3 14.8"/></g></g>
<g transform="translate(1283,84)" ><path d="M0 3 H17 M0 8 H17 M0 13 H17 M0 16 H17" stroke="#d89820" stroke-width="1" stroke-dasharray="3 1.5"/><path d="M1 13 L8 3.5 H16.5 L9.5 13Z" fill="#70d8d8" stroke="#000" stroke-width="1.4"/><path d="M0.5 15 L8 5 H16.5" fill="none" stroke="#000" stroke-width="1.4"/><path d="M2 14.5 H10 L16.5 6" fill="none" stroke="#000" stroke-width="1.4"/></g>
<g transform="translate(1309,84)" ><rect x="0" y="0.5" width="16.5" height="16" fill="#c0c0c0"/><path d="M0 3 H16.5 M0 7 H16.5 M0 11 H16.5 M0 15 H16.5" stroke="#d8d8d8" stroke-dasharray="2.5 1.5"/><path d="M5 6 H9 V9 H12 V13 H9 V16 H5 V13 H2 V9 H5Z" fill="#c8c8c8" stroke="#909090" stroke-width="1.2"/></g>
<g transform="translate(1333,84)" ><rect x="0" y="0.5" width="16.5" height="16" fill="#c0c0c0"/><path d="M0 3 H16.5 M0 7 H16.5 M0 11 H16.5 M0 15 H16.5" stroke="#d8d8d8" stroke-dasharray="2.5 1.5"/><path d="M5 6 H9 V9 H12 V13 H9 V16 H5 V13 H2 V9 H5Z" fill="#c8c8c8" stroke="#909090" stroke-width="1.2"/><path d="M10 0.5 V7 H14 V0.5" fill="#d8d8d8" stroke="#808080" stroke-width="1.3"/></g>
<g transform="translate(1357,84)" ><rect x="0" y="0.5" width="16.5" height="16" fill="#c0c0c0"/><path d="M0 3 H16.5 M0 7 H16.5 M0 11 H16.5 M0 15 H16.5" stroke="#d8d8d8" stroke-dasharray="2.5 1.5"/><path d="M8 0.5 V7 H12 V0.5" fill="#d8d8d8" stroke="#808080" stroke-width="1.3"/><path d="M3 9 H9 L7 16 H3Z" fill="#c8c8c8" stroke="#909090"/><circle cx="12" cy="10" r="2.6" fill="#f4f4f4" stroke="#a0a0a0"/><path d="M7 15 L10.5 11.5" stroke="#909090" stroke-width="1.3"/></g>
<g transform="translate(1381,84)" ><rect x="0" y="0.5" width="16.5" height="16" fill="#c0c0c0"/><path d="M0 3 H16.5 M0 7 H16.5 M0 11 H16.5 M0 15 H16.5" stroke="#d8d8d8" stroke-dasharray="2.5 1.5"/><path d="M3 5 L13.5 15 M13.5 5 L3 15" stroke="#8c8c8c" stroke-width="3.4"/></g>
<g transform="translate(1405,84)" ><rect x="0" y="0.5" width="16.5" height="16" fill="#c0c0c0"/><path d="M0 3 H16.5 M0 7 H16.5 M0 11 H16.5 M0 15 H16.5" stroke="#d8d8d8" stroke-dasharray="2.5 1.5"/><path d="M3 4 L13.5 15 M13.5 4 L3 15" stroke="#8c8c8c" stroke-width="2.6"/></g>
<g transform="translate(1439,84)" ><path d="M2 0 V17 M5.5 0 V17 M9 0 V17 M12.5 0 V17 M16 0 V17 M0 2 H17 M0 5.5 H17 M0 9 H17 M0 12.5 H17 M0 16 H17" stroke="#700000" stroke-width="1.4"/><path d="M9 9.5 Q8 4 11 2.5 Q12.5 0.5 14.5 2.5 Q17.5 3 17 7 Q17 10.5 14.5 10 V14 H12 V10 Q10 10.5 9 9.5Z" fill="#f8c060" stroke="#fff" stroke-width="1"/></g>
<g transform="translate(1467,84)" ><rect x="1" y="4" width="4" height="12" fill="#c8c8c8"/><path d="M1 3 H3" stroke="#000" stroke-width="1.2"/><path d="M1 9.5 H3" stroke="#ff0000" stroke-width="1.2"/></g></svg>
<svg id="dwg" class="abs" style="left:0;top:0" width="1487" height="867" viewBox="0 0 1487 867" shape-rendering="crispEdges" fill="none" stroke-width="1">
<defs><path id="c" d="M5 0h2v1h-2zM2 1h3v1h-3zM7 1h3v1h-3zM1 2h1v3h-1zM10 2h1v3h-1zM0 5h1v2h-1zM11 5h1v2h-1zM1 7h1v3h-1zM10 7h1v3h-1zM2 10h3v1h-3zM7 10h3v1h-3zM5 11h2v1h-2z"/></defs>
<g fill="#0000ff" stroke="none">
<use href="#c" x="570" y="182"/><use href="#c" x="583" y="182"/><use href="#c" x="597" y="182"/><use href="#c" x="610" y="182"/><use href="#c" x="623" y="182"/><use href="#c" x="637" y="182"/><use href="#c" x="650" y="182"/><use href="#c" x="557" y="195"/><use href="#c" x="570" y="195"/><use href="#c" x="583" y="195"/><use href="#c" x="597" y="195"/><use href="#c" x="610" y="195"/><use href="#c" x="623" y="195"/><use href="#c" x="637" y="195"/><use href="#c" x="650" y="195"/><use href="#c" x="557" y="208"/><use href="#c" x="570" y="208"/><use href="#c" x="583" y="208"/><use href="#c" x="597" y="208"/><use href="#c" x="610" y="208"/><use href="#c" x="623" y="208"/><use href="#c" x="637" y="208"/><use href="#c" x="650" y="208"/><use href="#c" x="557" y="221"/><use href="#c" x="570" y="221"/><use href="#c" x="583" y="221"/><use href="#c" x="597" y="221"/><use href="#c" x="610" y="221"/><use href="#c" x="623" y="221"/><use href="#c" x="637" y="221"/><use href="#c" x="650" y="221"/><use href="#c" x="557" y="235"/><use href="#c" x="570" y="235"/><use href="#c" x="583" y="235"/><use href="#c" x="597" y="235"/><use href="#c" x="610" y="235"/><use href="#c" x="623" y="235"/><use href="#c" x="637" y="235"/><use href="#c" x="650" y="235"/><use href="#c" x="557" y="248"/><use href="#c" x="570" y="248"/><use href="#c" x="583" y="248"/><use href="#c" x="597" y="248"/><use href="#c" x="610" y="248"/><use href="#c" x="623" y="248"/><use href="#c" x="637" y="248"/><use href="#c" x="650" y="248"/><use href="#c" x="557" y="261"/><use href="#c" x="570" y="261"/><use href="#c" x="583" y="261"/><use href="#c" x="597" y="261"/><use href="#c" x="610" y="261"/><use href="#c" x="623" y="261"/><use href="#c" x="637" y="261"/><use href="#c" x="650" y="261"/><use href="#c" x="557" y="274"/><use href="#c" x="570" y="274"/><use href="#c" x="583" y="274"/><use href="#c" x="597" y="274"/><use href="#c" x="610" y="274"/><use href="#c" x="623" y="274"/><use href="#c" x="637" y="274"/><use href="#c" x="650" y="274"/><use href="#c" x="557" y="287"/><use href="#c" x="570" y="287"/><use href="#c" x="583" y="287"/><use href="#c" x="597" y="287"/><use href="#c" x="610" y="287"/><use href="#c" x="623" y="287"/><use href="#c" x="637" y="287"/><use href="#c" x="650" y="287"/><use href="#c" x="570" y="300"/><use href="#c" x="583" y="300"/><use href="#c" x="597" y="300"/><use href="#c" x="610" y="300"/><use href="#c" x="623" y="300"/><use href="#c" x="637" y="300"/><use href="#c" x="650" y="300"/><use href="#c" x="570" y="314"/><use href="#c" x="583" y="314"/><use href="#c" x="597" y="314"/><use href="#c" x="610" y="314"/><use href="#c" x="623" y="314"/><use href="#c" x="637" y="314"/><use href="#c" x="650" y="314"/><use href="#c" x="570" y="327"/><use href="#c" x="583" y="327"/><use href="#c" x="597" y="327"/><use href="#c" x="610" y="327"/><use href="#c" x="623" y="327"/><use href="#c" x="637" y="327"/><use href="#c" x="650" y="327"/><use href="#c" x="597" y="340"/><use href="#c" x="610" y="340"/><use href="#c" x="623" y="340"/><use href="#c" x="637" y="340"/><use href="#c" x="650" y="340"/><use href="#c" x="597" y="353"/><use href="#c" x="610" y="353"/><use href="#c" x="623" y="353"/><use href="#c" x="637" y="353"/><use href="#c" x="650" y="353"/><use href="#c" x="663" y="353"/><use href="#c" x="597" y="366"/><use href="#c" x="610" y="366"/><use href="#c" x="623" y="366"/><use href="#c" x="637" y="366"/><use href="#c" x="650" y="366"/><use href="#c" x="663" y="366"/><use href="#c" x="597" y="380"/><use href="#c" x="610" y="380"/><use href="#c" x="623" y="380"/><use href="#c" x="637" y="380"/><use href="#c" x="650" y="380"/><use href="#c" x="663" y="380"/><use href="#c" x="597" y="393"/><use href="#c" x="610" y="393"/><use href="#c" x="623" y="393"/><use href="#c" x="637" y="393"/><use href="#c" x="650" y="393"/><use href="#c" x="663" y="393"/><use href="#c" x="570" y="406"/><use href="#c" x="583" y="406"/><use href="#c" x="597" y="406"/><use href="#c" x="663" y="406"/><use href="#c" x="731" y="179"/><use href="#c" x="744" y="179"/><use href="#c" x="757" y="179"/><use href="#c" x="771" y="179"/><use href="#c" x="784" y="179"/><use href="#c" x="731" y="192"/><use href="#c" x="744" y="192"/><use href="#c" x="757" y="192"/><use href="#c" x="771" y="192"/><use href="#c" x="784" y="192"/><use href="#c" x="731" y="205"/><use href="#c" x="744" y="205"/><use href="#c" x="757" y="205"/><use href="#c" x="771" y="205"/><use href="#c" x="784" y="205"/><use href="#c" x="731" y="218"/><use href="#c" x="744" y="218"/><use href="#c" x="757" y="218"/><use href="#c" x="771" y="218"/><use href="#c" x="784" y="218"/><use href="#c" x="731" y="232"/><use href="#c" x="744" y="232"/><use href="#c" x="757" y="232"/><use href="#c" x="771" y="232"/><use href="#c" x="784" y="232"/><use href="#c" x="731" y="245"/><use href="#c" x="744" y="245"/><use href="#c" x="757" y="245"/><use href="#c" x="771" y="245"/><use href="#c" x="784" y="245"/><use href="#c" x="731" y="258"/><use href="#c" x="744" y="258"/><use href="#c" x="757" y="258"/><use href="#c" x="771" y="258"/><use href="#c" x="784" y="258"/><use href="#c" x="856" y="380"/><use href="#c" x="869" y="380"/><use href="#c" x="882" y="380"/><use href="#c" x="896" y="380"/><use href="#c" x="909" y="380"/><use href="#c" x="922" y="380"/><use href="#c" x="935" y="380"/><use href="#c" x="949" y="380"/><use href="#c" x="962" y="380"/><use href="#c" x="975" y="380"/><use href="#c" x="989" y="380"/><use href="#c" x="1002" y="380"/><use href="#c" x="1015" y="380"/><use href="#c" x="1028" y="380"/><use href="#c" x="856" y="393"/><use href="#c" x="869" y="393"/><use href="#c" x="882" y="393"/><use href="#c" x="896" y="393"/><use href="#c" x="909" y="393"/><use href="#c" x="922" y="393"/><use href="#c" x="935" y="393"/><use href="#c" x="949" y="393"/><use href="#c" x="962" y="393"/><use href="#c" x="975" y="393"/><use href="#c" x="989" y="393"/><use href="#c" x="1002" y="393"/><use href="#c" x="1015" y="393"/><use href="#c" x="1028" y="393"/><use href="#c" x="856" y="407"/><use href="#c" x="869" y="407"/><use href="#c" x="882" y="407"/><use href="#c" x="896" y="407"/><use href="#c" x="909" y="407"/><use href="#c" x="922" y="407"/><use href="#c" x="935" y="407"/><use href="#c" x="949" y="407"/><use href="#c" x="962" y="407"/><use href="#c" x="975" y="407"/><use href="#c" x="989" y="407"/><use href="#c" x="1002" y="407"/><use href="#c" x="1015" y="407"/><use href="#c" x="1028" y="407"/><use href="#c" x="1135" y="380"/><use href="#c" x="1148" y="380"/><use href="#c" x="1162" y="380"/><use href="#c" x="1175" y="380"/><use href="#c" x="1188" y="380"/><use href="#c" x="1201" y="380"/><use href="#c" x="1215" y="380"/><use href="#c" x="1135" y="393"/><use href="#c" x="1148" y="393"/><use href="#c" x="1162" y="393"/><use href="#c" x="1175" y="393"/><use href="#c" x="1188" y="393"/><use href="#c" x="1201" y="393"/><use href="#c" x="1215" y="393"/><use href="#c" x="1228" y="393"/><use href="#c" x="1148" y="407"/><use href="#c" x="1162" y="407"/><use href="#c" x="1175" y="407"/><use href="#c" x="1188" y="407"/><use href="#c" x="1201" y="407"/><use href="#c" x="1215" y="407"/><use href="#c" x="1228" y="407"/><use href="#c" x="423" y="345"/><use href="#c" x="437" y="345"/><use href="#c" x="450" y="345"/><use href="#c" x="463" y="345"/><use href="#c" x="477" y="345"/><use href="#c" x="490" y="345"/><use href="#c" x="423" y="358"/><use href="#c" x="437" y="358"/><use href="#c" x="450" y="358"/><use href="#c" x="463" y="358"/><use href="#c" x="477" y="358"/><use href="#c" x="490" y="358"/><use href="#c" x="397" y="371"/><use href="#c" x="410" y="371"/><use href="#c" x="423" y="371"/><use href="#c" x="437" y="371"/><use href="#c" x="450" y="371"/><use href="#c" x="463" y="371"/><use href="#c" x="477" y="371"/><use href="#c" x="490" y="371"/><use href="#c" x="397" y="384"/><use href="#c" x="410" y="384"/><use href="#c" x="423" y="384"/><use href="#c" x="437" y="384"/><use href="#c" x="450" y="384"/><use href="#c" x="463" y="384"/><use href="#c" x="477" y="384"/><use href="#c" x="490" y="384"/><use href="#c" x="397" y="398"/><use href="#c" x="410" y="398"/><use href="#c" x="423" y="398"/><use href="#c" x="437" y="398"/><use href="#c" x="450" y="398"/><use href="#c" x="463" y="398"/><use href="#c" x="477" y="398"/><use href="#c" x="490" y="398"/><use href="#c" x="397" y="411"/><use href="#c" x="410" y="411"/><use href="#c" x="423" y="411"/><use href="#c" x="437" y="411"/><use href="#c" x="450" y="411"/><use href="#c" x="463" y="411"/><use href="#c" x="477" y="411"/><use href="#c" x="490" y="411"/><use href="#c" x="397" y="424"/><use href="#c" x="410" y="424"/><use href="#c" x="423" y="424"/><use href="#c" x="437" y="424"/><use href="#c" x="450" y="424"/><use href="#c" x="463" y="424"/><use href="#c" x="477" y="424"/><use href="#c" x="490" y="424"/><use href="#c" x="397" y="438"/><use href="#c" x="410" y="438"/><use href="#c" x="423" y="438"/><use href="#c" x="437" y="438"/><use href="#c" x="450" y="438"/><use href="#c" x="463" y="438"/><use href="#c" x="477" y="438"/><use href="#c" x="490" y="438"/><use href="#c" x="397" y="451"/><use href="#c" x="410" y="451"/><use href="#c" x="423" y="451"/><use href="#c" x="437" y="451"/><use href="#c" x="450" y="451"/><use href="#c" x="463" y="451"/><use href="#c" x="477" y="451"/><use href="#c" x="490" y="451"/><use href="#c" x="450" y="464"/><use href="#c" x="463" y="464"/><use href="#c" x="450" y="477"/><use href="#c" x="463" y="477"/><use href="#c" x="450" y="491"/><use href="#c" x="463" y="491"/><use href="#c" x="450" y="504"/><use href="#c" x="463" y="504"/><use href="#c" x="450" y="517"/><use href="#c" x="463" y="517"/><use href="#c" x="450" y="530"/><use href="#c" x="463" y="530"/><use href="#c" x="450" y="544"/><use href="#c" x="463" y="544"/><use href="#c" x="450" y="557"/><use href="#c" x="463" y="557"/><use href="#c" x="410" y="597"/><use href="#c" x="423" y="597"/><use href="#c" x="437" y="597"/><use href="#c" x="503" y="597"/><use href="#c" x="517" y="597"/><use href="#c" x="410" y="610"/><use href="#c" x="423" y="610"/><use href="#c" x="437" y="610"/><use href="#c" x="503" y="610"/><use href="#c" x="410" y="623"/><use href="#c" x="423" y="623"/><use href="#c" x="437" y="623"/><use href="#c" x="450" y="623"/><use href="#c" x="463" y="623"/><use href="#c" x="477" y="623"/><use href="#c" x="490" y="623"/><use href="#c" x="503" y="623"/><use href="#c" x="410" y="636"/><use href="#c" x="423" y="636"/><use href="#c" x="437" y="636"/><use href="#c" x="450" y="636"/><use href="#c" x="463" y="636"/><use href="#c" x="477" y="636"/><use href="#c" x="490" y="636"/><use href="#c" x="503" y="636"/><use href="#c" x="397" y="650"/><use href="#c" x="410" y="650"/><use href="#c" x="423" y="650"/><use href="#c" x="437" y="650"/><use href="#c" x="450" y="650"/><use href="#c" x="463" y="650"/><use href="#c" x="477" y="650"/><use href="#c" x="490" y="650"/><use href="#c" x="503" y="650"/><use href="#c" x="397" y="663"/><use href="#c" x="410" y="663"/><use href="#c" x="423" y="663"/><use href="#c" x="437" y="663"/><use href="#c" x="450" y="663"/><use href="#c" x="463" y="663"/><use href="#c" x="477" y="663"/><use href="#c" x="490" y="663"/><use href="#c" x="503" y="663"/><use href="#c" x="397" y="676"/><use href="#c" x="410" y="676"/><use href="#c" x="423" y="676"/><use href="#c" x="437" y="676"/><use href="#c" x="450" y="676"/><use href="#c" x="463" y="676"/><use href="#c" x="477" y="676"/><use href="#c" x="490" y="676"/><use href="#c" x="503" y="676"/><use href="#c" x="517" y="676"/><use href="#c" x="397" y="689"/><use href="#c" x="410" y="689"/><use href="#c" x="423" y="689"/><use href="#c" x="437" y="689"/><use href="#c" x="450" y="689"/><use href="#c" x="463" y="689"/><use href="#c" x="477" y="689"/><use href="#c" x="490" y="689"/><use href="#c" x="503" y="689"/><use href="#c" x="517" y="689"/><use href="#c" x="397" y="703"/><use href="#c" x="410" y="703"/><use href="#c" x="423" y="703"/><use href="#c" x="437" y="703"/><use href="#c" x="450" y="703"/><use href="#c" x="463" y="703"/><use href="#c" x="477" y="703"/><use href="#c" x="490" y="703"/><use href="#c" x="503" y="703"/><use href="#c" x="517" y="703"/><use href="#c" x="397" y="716"/><use href="#c" x="410" y="716"/><use href="#c" x="423" y="716"/><use href="#c" x="437" y="716"/><use href="#c" x="450" y="716"/><use href="#c" x="463" y="716"/><use href="#c" x="477" y="716"/><use href="#c" x="490" y="716"/><use href="#c" x="503" y="716"/><use href="#c" x="517" y="716"/><use href="#c" x="397" y="729"/><use href="#c" x="410" y="729"/><use href="#c" x="423" y="729"/><use href="#c" x="437" y="729"/><use href="#c" x="450" y="729"/><use href="#c" x="463" y="729"/><use href="#c" x="477" y="729"/><use href="#c" x="490" y="729"/><use href="#c" x="397" y="742"/><use href="#c" x="410" y="742"/><use href="#c" x="423" y="742"/><use href="#c" x="437" y="742"/><use href="#c" x="450" y="742"/><use href="#c" x="463" y="742"/><use href="#c" x="477" y="742"/><use href="#c" x="490" y="742"/><use href="#c" x="410" y="756"/><use href="#c" x="423" y="756"/><use href="#c" x="437" y="756"/><use href="#c" x="450" y="756"/><use href="#c" x="463" y="756"/><use href="#c" x="477" y="756"/><use href="#c" x="490" y="756"/><use href="#c" x="577" y="445"/><use href="#c" x="591" y="445"/><use href="#c" x="683" y="445"/><use href="#c" x="697" y="445"/><use href="#c" x="710" y="445"/><use href="#c" x="723" y="445"/><use href="#c" x="736" y="445"/><use href="#c" x="750" y="445"/><use href="#c" x="763" y="445"/><use href="#c" x="776" y="445"/><use href="#c" x="789" y="445"/><use href="#c" x="803" y="445"/><use href="#c" x="816" y="445"/><use href="#c" x="829" y="445"/><use href="#c" x="842" y="445"/><use href="#c" x="856" y="445"/><use href="#c" x="869" y="445"/><use href="#c" x="882" y="445"/><use href="#c" x="895" y="445"/><use href="#c" x="908" y="445"/><use href="#c" x="922" y="445"/><use href="#c" x="935" y="445"/><use href="#c" x="948" y="445"/><use href="#c" x="961" y="445"/><use href="#c" x="975" y="445"/><use href="#c" x="988" y="445"/><use href="#c" x="564" y="458"/><use href="#c" x="577" y="458"/><use href="#c" x="591" y="458"/><use href="#c" x="604" y="458"/><use href="#c" x="657" y="458"/><use href="#c" x="670" y="458"/><use href="#c" x="683" y="458"/><use href="#c" x="697" y="458"/><use href="#c" x="710" y="458"/><use href="#c" x="723" y="458"/><use href="#c" x="736" y="458"/><use href="#c" x="750" y="458"/><use href="#c" x="763" y="458"/><use href="#c" x="776" y="458"/><use href="#c" x="789" y="458"/><use href="#c" x="803" y="458"/><use href="#c" x="816" y="458"/><use href="#c" x="829" y="458"/><use href="#c" x="842" y="458"/><use href="#c" x="856" y="458"/><use href="#c" x="869" y="458"/><use href="#c" x="882" y="458"/><use href="#c" x="895" y="458"/><use href="#c" x="908" y="458"/><use href="#c" x="922" y="458"/><use href="#c" x="935" y="458"/><use href="#c" x="948" y="458"/><use href="#c" x="961" y="458"/><use href="#c" x="975" y="458"/><use href="#c" x="988" y="458"/><use href="#c" x="551" y="472"/><use href="#c" x="564" y="472"/><use href="#c" x="577" y="472"/><use href="#c" x="591" y="472"/><use href="#c" x="604" y="472"/><use href="#c" x="617" y="472"/><use href="#c" x="630" y="472"/><use href="#c" x="644" y="472"/><use href="#c" x="657" y="472"/><use href="#c" x="670" y="472"/><use href="#c" x="683" y="472"/><use href="#c" x="697" y="472"/><use href="#c" x="710" y="472"/><use href="#c" x="723" y="472"/><use href="#c" x="736" y="472"/><use href="#c" x="750" y="472"/><use href="#c" x="763" y="472"/><use href="#c" x="776" y="472"/><use href="#c" x="789" y="472"/><use href="#c" x="803" y="472"/><use href="#c" x="816" y="472"/><use href="#c" x="829" y="472"/><use href="#c" x="842" y="472"/><use href="#c" x="856" y="472"/><use href="#c" x="869" y="472"/><use href="#c" x="882" y="472"/><use href="#c" x="895" y="472"/><use href="#c" x="908" y="472"/><use href="#c" x="922" y="472"/><use href="#c" x="935" y="472"/><use href="#c" x="948" y="472"/><use href="#c" x="961" y="472"/><use href="#c" x="975" y="472"/><use href="#c" x="988" y="472"/><use href="#c" x="551" y="485"/><use href="#c" x="564" y="485"/><use href="#c" x="577" y="485"/><use href="#c" x="591" y="485"/><use href="#c" x="604" y="485"/><use href="#c" x="617" y="485"/><use href="#c" x="630" y="485"/><use href="#c" x="644" y="485"/><use href="#c" x="657" y="485"/><use href="#c" x="670" y="485"/><use href="#c" x="683" y="485"/><use href="#c" x="697" y="485"/><use href="#c" x="710" y="485"/><use href="#c" x="723" y="485"/><use href="#c" x="736" y="485"/><use href="#c" x="750" y="485"/><use href="#c" x="763" y="485"/><use href="#c" x="776" y="485"/><use href="#c" x="789" y="485"/><use href="#c" x="803" y="485"/><use href="#c" x="816" y="485"/><use href="#c" x="829" y="485"/><use href="#c" x="842" y="485"/><use href="#c" x="856" y="485"/><use href="#c" x="869" y="485"/><use href="#c" x="882" y="485"/><use href="#c" x="895" y="485"/><use href="#c" x="908" y="485"/><use href="#c" x="922" y="485"/><use href="#c" x="935" y="485"/><use href="#c" x="948" y="485"/><use href="#c" x="961" y="485"/><use href="#c" x="975" y="485"/><use href="#c" x="988" y="485"/><use href="#c" x="551" y="498"/><use href="#c" x="564" y="498"/><use href="#c" x="577" y="498"/><use href="#c" x="591" y="498"/><use href="#c" x="604" y="498"/><use href="#c" x="617" y="498"/><use href="#c" x="630" y="498"/><use href="#c" x="644" y="498"/><use href="#c" x="657" y="498"/><use href="#c" x="670" y="498"/><use href="#c" x="683" y="498"/><use href="#c" x="697" y="498"/><use href="#c" x="710" y="498"/><use href="#c" x="723" y="498"/><use href="#c" x="736" y="498"/><use href="#c" x="750" y="498"/><use href="#c" x="763" y="498"/><use href="#c" x="776" y="498"/><use href="#c" x="789" y="498"/><use href="#c" x="803" y="498"/><use href="#c" x="816" y="498"/><use href="#c" x="829" y="498"/><use href="#c" x="842" y="498"/><use href="#c" x="856" y="498"/><use href="#c" x="869" y="498"/><use href="#c" x="882" y="498"/><use href="#c" x="895" y="498"/><use href="#c" x="908" y="498"/><use href="#c" x="922" y="498"/><use href="#c" x="935" y="498"/><use href="#c" x="948" y="498"/><use href="#c" x="961" y="498"/><use href="#c" x="975" y="498"/><use href="#c" x="988" y="498"/><use href="#c" x="551" y="511"/><use href="#c" x="564" y="511"/><use href="#c" x="577" y="511"/><use href="#c" x="591" y="511"/><use href="#c" x="604" y="511"/><use href="#c" x="617" y="511"/><use href="#c" x="630" y="511"/><use href="#c" x="644" y="511"/><use href="#c" x="657" y="511"/><use href="#c" x="670" y="511"/><use href="#c" x="683" y="511"/><use href="#c" x="697" y="511"/><use href="#c" x="710" y="511"/><use href="#c" x="723" y="511"/><use href="#c" x="736" y="511"/><use href="#c" x="750" y="511"/><use href="#c" x="763" y="511"/><use href="#c" x="776" y="511"/><use href="#c" x="789" y="511"/><use href="#c" x="803" y="511"/><use href="#c" x="816" y="511"/><use href="#c" x="829" y="511"/><use href="#c" x="842" y="511"/><use href="#c" x="856" y="511"/><use href="#c" x="869" y="511"/><use href="#c" x="882" y="511"/><use href="#c" x="895" y="511"/><use href="#c" x="908" y="511"/><use href="#c" x="922" y="511"/><use href="#c" x="935" y="511"/><use href="#c" x="948" y="511"/><use href="#c" x="961" y="511"/><use href="#c" x="975" y="511"/><use href="#c" x="988" y="511"/><use href="#c" x="551" y="525"/><use href="#c" x="564" y="525"/><use href="#c" x="577" y="525"/><use href="#c" x="591" y="525"/><use href="#c" x="604" y="525"/><use href="#c" x="617" y="525"/><use href="#c" x="630" y="525"/><use href="#c" x="644" y="525"/><use href="#c" x="657" y="525"/><use href="#c" x="670" y="525"/><use href="#c" x="683" y="525"/><use href="#c" x="697" y="525"/><use href="#c" x="710" y="525"/><use href="#c" x="723" y="525"/><use href="#c" x="736" y="525"/><use href="#c" x="750" y="525"/><use href="#c" x="763" y="525"/><use href="#c" x="776" y="525"/><use href="#c" x="789" y="525"/><use href="#c" x="803" y="525"/><use href="#c" x="816" y="525"/><use href="#c" x="829" y="525"/><use href="#c" x="842" y="525"/><use href="#c" x="856" y="525"/><use href="#c" x="869" y="525"/><use href="#c" x="882" y="525"/><use href="#c" x="895" y="525"/><use href="#c" x="908" y="525"/><use href="#c" x="922" y="525"/><use href="#c" x="935" y="525"/><use href="#c" x="948" y="525"/><use href="#c" x="961" y="525"/><use href="#c" x="551" y="538"/><use href="#c" x="564" y="538"/><use href="#c" x="577" y="538"/><use href="#c" x="591" y="538"/><use href="#c" x="604" y="538"/><use href="#c" x="617" y="538"/><use href="#c" x="630" y="538"/><use href="#c" x="644" y="538"/><use href="#c" x="657" y="538"/><use href="#c" x="670" y="538"/><use href="#c" x="683" y="538"/><use href="#c" x="697" y="538"/><use href="#c" x="710" y="538"/><use href="#c" x="723" y="538"/><use href="#c" x="736" y="538"/><use href="#c" x="750" y="538"/><use href="#c" x="763" y="538"/><use href="#c" x="776" y="538"/><use href="#c" x="789" y="538"/><use href="#c" x="803" y="538"/><use href="#c" x="816" y="538"/><use href="#c" x="829" y="538"/><use href="#c" x="842" y="538"/><use href="#c" x="856" y="538"/><use href="#c" x="869" y="538"/><use href="#c" x="882" y="538"/><use href="#c" x="895" y="538"/><use href="#c" x="908" y="538"/><use href="#c" x="922" y="538"/><use href="#c" x="935" y="538"/><use href="#c" x="948" y="538"/><use href="#c" x="961" y="538"/><use href="#c" x="975" y="538"/><use href="#c" x="988" y="538"/><use href="#c" x="551" y="551"/><use href="#c" x="564" y="551"/><use href="#c" x="577" y="551"/><use href="#c" x="591" y="551"/><use href="#c" x="604" y="551"/><use href="#c" x="617" y="551"/><use href="#c" x="630" y="551"/><use href="#c" x="644" y="551"/><use href="#c" x="657" y="551"/><use href="#c" x="670" y="551"/><use href="#c" x="683" y="551"/><use href="#c" x="697" y="551"/><use href="#c" x="710" y="551"/><use href="#c" x="723" y="551"/><use href="#c" x="736" y="551"/><use href="#c" x="750" y="551"/><use href="#c" x="763" y="551"/><use href="#c" x="776" y="551"/><use href="#c" x="789" y="551"/><use href="#c" x="803" y="551"/><use href="#c" x="816" y="551"/><use href="#c" x="829" y="551"/><use href="#c" x="842" y="551"/><use href="#c" x="856" y="551"/><use href="#c" x="869" y="551"/><use href="#c" x="882" y="551"/><use href="#c" x="895" y="551"/><use href="#c" x="908" y="551"/><use href="#c" x="922" y="551"/><use href="#c" x="935" y="551"/><use href="#c" x="948" y="551"/><use href="#c" x="961" y="551"/><use href="#c" x="975" y="551"/><use href="#c" x="988" y="551"/><use href="#c" x="551" y="565"/><use href="#c" x="564" y="565"/><use href="#c" x="577" y="565"/><use href="#c" x="591" y="565"/><use href="#c" x="604" y="565"/><use href="#c" x="617" y="565"/><use href="#c" x="630" y="565"/><use href="#c" x="644" y="565"/><use href="#c" x="657" y="565"/><use href="#c" x="670" y="565"/><use href="#c" x="683" y="565"/><use href="#c" x="697" y="565"/><use href="#c" x="710" y="565"/><use href="#c" x="723" y="565"/><use href="#c" x="736" y="565"/><use href="#c" x="750" y="565"/><use href="#c" x="763" y="565"/><use href="#c" x="776" y="565"/><use href="#c" x="789" y="565"/><use href="#c" x="803" y="565"/><use href="#c" x="816" y="565"/><use href="#c" x="829" y="565"/><use href="#c" x="842" y="565"/><use href="#c" x="856" y="565"/><use href="#c" x="869" y="565"/><use href="#c" x="882" y="565"/><use href="#c" x="895" y="565"/><use href="#c" x="908" y="565"/><use href="#c" x="922" y="565"/><use href="#c" x="935" y="565"/><use href="#c" x="948" y="565"/><use href="#c" x="961" y="565"/><use href="#c" x="975" y="565"/><use href="#c" x="988" y="565"/><use href="#c" x="577" y="578"/><use href="#c" x="591" y="578"/><use href="#c" x="604" y="578"/><use href="#c" x="617" y="578"/><use href="#c" x="630" y="578"/><use href="#c" x="644" y="578"/><use href="#c" x="657" y="578"/><use href="#c" x="670" y="578"/><use href="#c" x="683" y="578"/><use href="#c" x="697" y="578"/><use href="#c" x="710" y="578"/><use href="#c" x="723" y="578"/><use href="#c" x="736" y="578"/><use href="#c" x="750" y="578"/><use href="#c" x="763" y="578"/><use href="#c" x="776" y="578"/><use href="#c" x="789" y="578"/><use href="#c" x="803" y="578"/><use href="#c" x="816" y="578"/><use href="#c" x="829" y="578"/><use href="#c" x="842" y="578"/><use href="#c" x="856" y="578"/><use href="#c" x="869" y="578"/><use href="#c" x="882" y="578"/><use href="#c" x="895" y="578"/><use href="#c" x="908" y="578"/><use href="#c" x="922" y="578"/><use href="#c" x="935" y="578"/><use href="#c" x="948" y="578"/><use href="#c" x="961" y="578"/><use href="#c" x="975" y="578"/><use href="#c" x="988" y="578"/><use href="#c" x="577" y="591"/><use href="#c" x="591" y="591"/><use href="#c" x="604" y="591"/><use href="#c" x="617" y="591"/><use href="#c" x="630" y="591"/><use href="#c" x="644" y="591"/><use href="#c" x="657" y="591"/><use href="#c" x="670" y="591"/><use href="#c" x="683" y="591"/><use href="#c" x="697" y="591"/><use href="#c" x="710" y="591"/><use href="#c" x="723" y="591"/><use href="#c" x="736" y="591"/><use href="#c" x="750" y="591"/><use href="#c" x="763" y="591"/><use href="#c" x="776" y="591"/><use href="#c" x="789" y="591"/><use href="#c" x="803" y="591"/><use href="#c" x="816" y="591"/><use href="#c" x="829" y="591"/><use href="#c" x="842" y="591"/><use href="#c" x="856" y="591"/><use href="#c" x="869" y="591"/><use href="#c" x="882" y="591"/><use href="#c" x="895" y="591"/><use href="#c" x="908" y="591"/><use href="#c" x="922" y="591"/><use href="#c" x="935" y="591"/><use href="#c" x="948" y="591"/><use href="#c" x="961" y="591"/><use href="#c" x="975" y="591"/><use href="#c" x="988" y="591"/><use href="#c" x="577" y="604"/><use href="#c" x="591" y="604"/><use href="#c" x="604" y="604"/><use href="#c" x="617" y="604"/><use href="#c" x="630" y="604"/><use href="#c" x="644" y="604"/><use href="#c" x="657" y="604"/><use href="#c" x="670" y="604"/><use href="#c" x="683" y="604"/><use href="#c" x="697" y="604"/><use href="#c" x="710" y="604"/><use href="#c" x="723" y="604"/><use href="#c" x="736" y="604"/><use href="#c" x="750" y="604"/><use href="#c" x="763" y="604"/><use href="#c" x="776" y="604"/><use href="#c" x="789" y="604"/><use href="#c" x="803" y="604"/><use href="#c" x="816" y="604"/><use href="#c" x="829" y="604"/><use href="#c" x="842" y="604"/><use href="#c" x="856" y="604"/><use href="#c" x="869" y="604"/><use href="#c" x="882" y="604"/><use href="#c" x="895" y="604"/><use href="#c" x="908" y="604"/><use href="#c" x="922" y="604"/><use href="#c" x="935" y="604"/><use href="#c" x="948" y="604"/><use href="#c" x="961" y="604"/><use href="#c" x="975" y="604"/><use href="#c" x="988" y="604"/><use href="#c" x="577" y="618"/><use href="#c" x="591" y="618"/><use href="#c" x="604" y="618"/><use href="#c" x="617" y="618"/><use href="#c" x="630" y="618"/><use href="#c" x="644" y="618"/><use href="#c" x="657" y="618"/><use href="#c" x="670" y="618"/><use href="#c" x="683" y="618"/><use href="#c" x="697" y="618"/><use href="#c" x="710" y="618"/><use href="#c" x="723" y="618"/><use href="#c" x="736" y="618"/><use href="#c" x="750" y="618"/><use href="#c" x="763" y="618"/><use href="#c" x="776" y="618"/><use href="#c" x="789" y="618"/><use href="#c" x="803" y="618"/><use href="#c" x="816" y="618"/><use href="#c" x="829" y="618"/><use href="#c" x="842" y="618"/><use href="#c" x="856" y="618"/><use href="#c" x="869" y="618"/><use href="#c" x="882" y="618"/><use href="#c" x="895" y="618"/><use href="#c" x="908" y="618"/><use href="#c" x="922" y="618"/><use href="#c" x="935" y="618"/><use href="#c" x="948" y="618"/><use href="#c" x="961" y="618"/><use href="#c" x="975" y="618"/><use href="#c" x="988" y="618"/><use href="#c" x="1056" y="458"/><use href="#c" x="1070" y="458"/><use href="#c" x="1056" y="472"/><use href="#c" x="1070" y="472"/><use href="#c" x="1083" y="472"/><use href="#c" x="1056" y="485"/><use href="#c" x="1070" y="485"/><use href="#c" x="1083" y="485"/><use href="#c" x="1056" y="498"/><use href="#c" x="1070" y="498"/><use href="#c" x="1083" y="498"/><use href="#c" x="1056" y="511"/><use href="#c" x="1056" y="525"/><use href="#c" x="1056" y="538"/><use href="#c" x="1056" y="551"/><use href="#c" x="1056" y="565"/><use href="#c" x="1056" y="578"/><use href="#c" x="1056" y="591"/><use href="#c" x="1056" y="604"/><use href="#c" x="577" y="649"/><use href="#c" x="591" y="649"/><use href="#c" x="604" y="649"/><use href="#c" x="617" y="649"/><use href="#c" x="630" y="649"/><use href="#c" x="644" y="649"/><use href="#c" x="657" y="649"/><use href="#c" x="670" y="649"/><use href="#c" x="683" y="649"/><use href="#c" x="697" y="649"/><use href="#c" x="710" y="649"/><use href="#c" x="723" y="649"/><use href="#c" x="736" y="649"/><use href="#c" x="750" y="649"/><use href="#c" x="763" y="649"/><use href="#c" x="776" y="649"/><use href="#c" x="789" y="649"/><use href="#c" x="803" y="649"/><use href="#c" x="816" y="649"/><use href="#c" x="829" y="649"/><use href="#c" x="842" y="649"/><use href="#c" x="856" y="649"/><use href="#c" x="869" y="649"/><use href="#c" x="882" y="649"/><use href="#c" x="895" y="649"/><use href="#c" x="908" y="649"/><use href="#c" x="922" y="649"/><use href="#c" x="935" y="649"/><use href="#c" x="948" y="649"/><use href="#c" x="961" y="649"/><use href="#c" x="975" y="649"/><use href="#c" x="988" y="649"/><use href="#c" x="1001" y="649"/><use href="#c" x="1014" y="649"/><use href="#c" x="1028" y="649"/><use href="#c" x="1041" y="649"/><use href="#c" x="577" y="662"/><use href="#c" x="591" y="662"/><use href="#c" x="604" y="662"/><use href="#c" x="617" y="662"/><use href="#c" x="630" y="662"/><use href="#c" x="644" y="662"/><use href="#c" x="657" y="662"/><use href="#c" x="670" y="662"/><use href="#c" x="683" y="662"/><use href="#c" x="697" y="662"/><use href="#c" x="710" y="662"/><use href="#c" x="723" y="662"/><use href="#c" x="736" y="662"/><use href="#c" x="750" y="662"/><use href="#c" x="763" y="662"/><use href="#c" x="776" y="662"/><use href="#c" x="789" y="662"/><use href="#c" x="803" y="662"/><use href="#c" x="816" y="662"/><use href="#c" x="829" y="662"/><use href="#c" x="842" y="662"/><use href="#c" x="856" y="662"/><use href="#c" x="869" y="662"/><use href="#c" x="882" y="662"/><use href="#c" x="895" y="662"/><use href="#c" x="908" y="662"/><use href="#c" x="922" y="662"/><use href="#c" x="935" y="662"/><use href="#c" x="948" y="662"/><use href="#c" x="961" y="662"/><use href="#c" x="975" y="662"/><use href="#c" x="988" y="662"/><use href="#c" x="1001" y="662"/><use href="#c" x="1014" y="662"/><use href="#c" x="1028" y="662"/><use href="#c" x="1041" y="662"/><use href="#c" x="1054" y="662"/><use href="#c" x="1067" y="662"/><use href="#c" x="551" y="675"/><use href="#c" x="564" y="675"/><use href="#c" x="577" y="675"/><use href="#c" x="591" y="675"/><use href="#c" x="604" y="675"/><use href="#c" x="617" y="675"/><use href="#c" x="630" y="675"/><use href="#c" x="644" y="675"/><use href="#c" x="657" y="675"/><use href="#c" x="670" y="675"/><use href="#c" x="683" y="675"/><use href="#c" x="697" y="675"/><use href="#c" x="710" y="675"/><use href="#c" x="723" y="675"/><use href="#c" x="736" y="675"/><use href="#c" x="750" y="675"/><use href="#c" x="763" y="675"/><use href="#c" x="776" y="675"/><use href="#c" x="789" y="675"/><use href="#c" x="803" y="675"/><use href="#c" x="816" y="675"/><use href="#c" x="829" y="675"/><use href="#c" x="842" y="675"/><use href="#c" x="856" y="675"/><use href="#c" x="869" y="675"/><use href="#c" x="882" y="675"/><use href="#c" x="895" y="675"/><use href="#c" x="908" y="675"/><use href="#c" x="922" y="675"/><use href="#c" x="935" y="675"/><use href="#c" x="948" y="675"/><use href="#c" x="961" y="675"/><use href="#c" x="975" y="675"/><use href="#c" x="988" y="675"/><use href="#c" x="1001" y="675"/><use href="#c" x="1014" y="675"/><use href="#c" x="1028" y="675"/><use href="#c" x="1041" y="675"/><use href="#c" x="1054" y="675"/><use href="#c" x="1067" y="675"/><use href="#c" x="1081" y="675"/><use href="#c" x="1094" y="675"/><use href="#c" x="1107" y="675"/><use href="#c" x="551" y="689"/><use href="#c" x="564" y="689"/><use href="#c" x="577" y="689"/><use href="#c" x="591" y="689"/><use href="#c" x="604" y="689"/><use href="#c" x="617" y="689"/><use href="#c" x="630" y="689"/><use href="#c" x="644" y="689"/><use href="#c" x="657" y="689"/><use href="#c" x="670" y="689"/><use href="#c" x="683" y="689"/><use href="#c" x="697" y="689"/><use href="#c" x="710" y="689"/><use href="#c" x="723" y="689"/><use href="#c" x="736" y="689"/><use href="#c" x="750" y="689"/><use href="#c" x="763" y="689"/><use href="#c" x="776" y="689"/><use href="#c" x="789" y="689"/><use href="#c" x="803" y="689"/><use href="#c" x="816" y="689"/><use href="#c" x="829" y="689"/><use href="#c" x="842" y="689"/><use href="#c" x="856" y="689"/><use href="#c" x="869" y="689"/><use href="#c" x="882" y="689"/><use href="#c" x="895" y="689"/><use href="#c" x="908" y="689"/><use href="#c" x="922" y="689"/><use href="#c" x="935" y="689"/><use href="#c" x="948" y="689"/><use href="#c" x="961" y="689"/><use href="#c" x="975" y="689"/><use href="#c" x="988" y="689"/><use href="#c" x="1001" y="689"/><use href="#c" x="1014" y="689"/><use href="#c" x="1028" y="689"/><use href="#c" x="1041" y="689"/><use href="#c" x="1054" y="689"/><use href="#c" x="1067" y="689"/><use href="#c" x="1081" y="689"/><use href="#c" x="1094" y="689"/><use href="#c" x="1107" y="689"/><use href="#c" x="551" y="702"/><use href="#c" x="564" y="702"/><use href="#c" x="577" y="702"/><use href="#c" x="591" y="702"/><use href="#c" x="604" y="702"/><use href="#c" x="617" y="702"/><use href="#c" x="630" y="702"/><use href="#c" x="644" y="702"/><use href="#c" x="657" y="702"/><use href="#c" x="670" y="702"/><use href="#c" x="683" y="702"/><use href="#c" x="697" y="702"/><use href="#c" x="710" y="702"/><use href="#c" x="723" y="702"/><use href="#c" x="736" y="702"/><use href="#c" x="750" y="702"/><use href="#c" x="763" y="702"/><use href="#c" x="776" y="702"/><use href="#c" x="789" y="702"/><use href="#c" x="803" y="702"/><use href="#c" x="816" y="702"/><use href="#c" x="829" y="702"/><use href="#c" x="842" y="702"/><use href="#c" x="856" y="702"/><use href="#c" x="869" y="702"/><use href="#c" x="882" y="702"/><use href="#c" x="895" y="702"/><use href="#c" x="908" y="702"/><use href="#c" x="922" y="702"/><use href="#c" x="935" y="702"/><use href="#c" x="948" y="702"/><use href="#c" x="961" y="702"/><use href="#c" x="975" y="702"/><use href="#c" x="988" y="702"/><use href="#c" x="1001" y="702"/><use href="#c" x="1014" y="702"/><use href="#c" x="1028" y="702"/><use href="#c" x="1041" y="702"/><use href="#c" x="1054" y="702"/><use href="#c" x="1067" y="702"/><use href="#c" x="1081" y="702"/><use href="#c" x="1094" y="702"/><use href="#c" x="1107" y="702"/><use href="#c" x="551" y="715"/><use href="#c" x="564" y="715"/><use href="#c" x="577" y="715"/><use href="#c" x="591" y="715"/><use href="#c" x="604" y="715"/><use href="#c" x="617" y="715"/><use href="#c" x="630" y="715"/><use href="#c" x="644" y="715"/><use href="#c" x="657" y="715"/><use href="#c" x="670" y="715"/><use href="#c" x="683" y="715"/><use href="#c" x="763" y="715"/><use href="#c" x="776" y="715"/><use href="#c" x="789" y="715"/><use href="#c" x="803" y="715"/><use href="#c" x="816" y="715"/><use href="#c" x="829" y="715"/><use href="#c" x="842" y="715"/><use href="#c" x="922" y="715"/><use href="#c" x="935" y="715"/><use href="#c" x="948" y="715"/><use href="#c" x="961" y="715"/><use href="#c" x="975" y="715"/><use href="#c" x="988" y="715"/><use href="#c" x="1001" y="715"/><use href="#c" x="1014" y="715"/><use href="#c" x="1094" y="715"/><use href="#c" x="1107" y="715"/><use href="#c" x="577" y="729"/><use href="#c" x="591" y="729"/><use href="#c" x="604" y="729"/><use href="#c" x="617" y="729"/><use href="#c" x="630" y="729"/><use href="#c" x="644" y="729"/><use href="#c" x="657" y="729"/><use href="#c" x="670" y="729"/><use href="#c" x="683" y="729"/><use href="#c" x="763" y="729"/><use href="#c" x="776" y="729"/><use href="#c" x="789" y="729"/><use href="#c" x="803" y="729"/><use href="#c" x="816" y="729"/><use href="#c" x="829" y="729"/><use href="#c" x="842" y="729"/><use href="#c" x="922" y="729"/><use href="#c" x="935" y="729"/><use href="#c" x="948" y="729"/><use href="#c" x="961" y="729"/><use href="#c" x="975" y="729"/><use href="#c" x="988" y="729"/><use href="#c" x="1001" y="729"/><use href="#c" x="1014" y="729"/><use href="#c" x="1094" y="729"/><use href="#c" x="1107" y="729"/><use href="#c" x="1208" y="443"/><use href="#c" x="1221" y="443"/><use href="#c" x="1115" y="456"/><use href="#c" x="1128" y="456"/><use href="#c" x="1208" y="456"/><use href="#c" x="1221" y="456"/><use href="#c" x="1234" y="456"/><use href="#c" x="1115" y="469"/><use href="#c" x="1128" y="469"/><use href="#c" x="1208" y="469"/><use href="#c" x="1221" y="469"/><use href="#c" x="1234" y="469"/><use href="#c" x="1115" y="483"/><use href="#c" x="1128" y="483"/><use href="#c" x="1141" y="483"/><use href="#c" x="1155" y="483"/><use href="#c" x="1168" y="483"/><use href="#c" x="1181" y="483"/><use href="#c" x="1194" y="483"/><use href="#c" x="1208" y="483"/><use href="#c" x="1221" y="483"/><use href="#c" x="1234" y="483"/><use href="#c" x="1115" y="496"/><use href="#c" x="1128" y="496"/><use href="#c" x="1141" y="496"/><use href="#c" x="1155" y="496"/><use href="#c" x="1168" y="496"/><use href="#c" x="1181" y="496"/><use href="#c" x="1194" y="496"/><use href="#c" x="1208" y="496"/><use href="#c" x="1221" y="496"/><use href="#c" x="1234" y="496"/><use href="#c" x="1115" y="509"/><use href="#c" x="1128" y="509"/><use href="#c" x="1141" y="509"/><use href="#c" x="1155" y="509"/><use href="#c" x="1168" y="509"/><use href="#c" x="1181" y="509"/><use href="#c" x="1194" y="509"/><use href="#c" x="1208" y="509"/><use href="#c" x="1221" y="509"/><use href="#c" x="1234" y="509"/><use href="#c" x="1115" y="523"/><use href="#c" x="1128" y="523"/><use href="#c" x="1141" y="523"/><use href="#c" x="1155" y="523"/><use href="#c" x="1168" y="523"/><use href="#c" x="1181" y="523"/><use href="#c" x="1194" y="523"/><use href="#c" x="1208" y="523"/><use href="#c" x="1221" y="523"/><use href="#c" x="1234" y="523"/><use href="#c" x="1168" y="536"/><use href="#c" x="1181" y="536"/><use href="#c" x="1194" y="536"/><use href="#c" x="1208" y="536"/><use href="#c" x="1221" y="536"/><use href="#c" x="1234" y="536"/><use href="#c" x="1168" y="549"/><use href="#c" x="1181" y="549"/><use href="#c" x="1194" y="549"/><use href="#c" x="1208" y="549"/><use href="#c" x="1221" y="549"/><use href="#c" x="1234" y="549"/><use href="#c" x="1168" y="562"/><use href="#c" x="1181" y="562"/><use href="#c" x="1194" y="562"/><use href="#c" x="1208" y="562"/><use href="#c" x="1221" y="562"/><use href="#c" x="1234" y="562"/><use href="#c" x="1168" y="576"/><use href="#c" x="1181" y="576"/><use href="#c" x="1194" y="576"/><use href="#c" x="1208" y="576"/><use href="#c" x="1221" y="576"/><use href="#c" x="1234" y="576"/><use href="#c" x="1115" y="589"/><use href="#c" x="1128" y="589"/><use href="#c" x="1141" y="589"/><use href="#c" x="1155" y="589"/><use href="#c" x="1168" y="589"/><use href="#c" x="1181" y="589"/><use href="#c" x="1194" y="589"/><use href="#c" x="1208" y="589"/><use href="#c" x="1221" y="589"/><use href="#c" x="1234" y="589"/><use href="#c" x="1128" y="602"/><use href="#c" x="1141" y="602"/><use href="#c" x="1155" y="602"/><use href="#c" x="1168" y="602"/><use href="#c" x="1181" y="602"/><use href="#c" x="1194" y="602"/><use href="#c" x="1208" y="602"/><use href="#c" x="1221" y="602"/><use href="#c" x="1234" y="602"/><use href="#c" x="1155" y="616"/><use href="#c" x="1168" y="616"/><use href="#c" x="1181" y="616"/><use href="#c" x="1194" y="616"/><use href="#c" x="1208" y="616"/><use href="#c" x="1265" y="449"/><use href="#c" x="1278" y="449"/><use href="#c" x="1291" y="449"/><use href="#c" x="1304" y="449"/><use href="#c" x="1318" y="449"/><use href="#c" x="1331" y="449"/><use href="#c" x="1344" y="449"/><use href="#c" x="1358" y="449"/><use href="#c" x="1371" y="449"/><use href="#c" x="1265" y="462"/><use href="#c" x="1278" y="462"/><use href="#c" x="1291" y="462"/><use href="#c" x="1304" y="462"/><use href="#c" x="1318" y="462"/><use href="#c" x="1331" y="462"/><use href="#c" x="1344" y="462"/><use href="#c" x="1358" y="462"/><use href="#c" x="1371" y="462"/><use href="#c" x="1265" y="475"/><use href="#c" x="1278" y="475"/><use href="#c" x="1291" y="475"/><use href="#c" x="1304" y="475"/><use href="#c" x="1318" y="475"/><use href="#c" x="1331" y="475"/><use href="#c" x="1344" y="475"/><use href="#c" x="1358" y="475"/><use href="#c" x="1371" y="475"/><use href="#c" x="1384" y="475"/><use href="#c" x="1265" y="489"/><use href="#c" x="1278" y="489"/><use href="#c" x="1291" y="489"/><use href="#c" x="1304" y="489"/><use href="#c" x="1318" y="489"/><use href="#c" x="1331" y="489"/><use href="#c" x="1344" y="489"/><use href="#c" x="1358" y="489"/><use href="#c" x="1371" y="489"/><use href="#c" x="1384" y="489"/><use href="#c" x="1265" y="502"/><use href="#c" x="1278" y="502"/><use href="#c" x="1291" y="502"/><use href="#c" x="1304" y="502"/><use href="#c" x="1318" y="502"/><use href="#c" x="1331" y="502"/><use href="#c" x="1344" y="502"/><use href="#c" x="1358" y="502"/><use href="#c" x="1371" y="502"/><use href="#c" x="1384" y="502"/><use href="#c" x="1265" y="515"/><use href="#c" x="1278" y="515"/><use href="#c" x="1291" y="515"/><use href="#c" x="1304" y="515"/><use href="#c" x="1318" y="515"/><use href="#c" x="1331" y="515"/><use href="#c" x="1344" y="515"/><use href="#c" x="1358" y="515"/><use href="#c" x="1371" y="515"/><use href="#c" x="1384" y="515"/><use href="#c" x="1265" y="528"/><use href="#c" x="1278" y="528"/><use href="#c" x="1291" y="528"/><use href="#c" x="1304" y="528"/><use href="#c" x="1318" y="528"/><use href="#c" x="1344" y="528"/><use href="#c" x="1358" y="528"/><use href="#c" x="1371" y="528"/><use href="#c" x="1384" y="528"/><use href="#c" x="1265" y="542"/><use href="#c" x="1278" y="542"/><use href="#c" x="1291" y="542"/><use href="#c" x="1304" y="542"/><use href="#c" x="1318" y="542"/><use href="#c" x="1344" y="542"/><use href="#c" x="1358" y="542"/><use href="#c" x="1371" y="542"/><use href="#c" x="1384" y="542"/><use href="#c" x="1265" y="555"/><use href="#c" x="1278" y="555"/><use href="#c" x="1291" y="555"/><use href="#c" x="1304" y="555"/><use href="#c" x="1318" y="555"/><use href="#c" x="1344" y="555"/><use href="#c" x="1358" y="555"/><use href="#c" x="1371" y="555"/><use href="#c" x="1384" y="555"/><use href="#c" x="1265" y="568"/><use href="#c" x="1278" y="568"/><use href="#c" x="1291" y="568"/><use href="#c" x="1304" y="568"/><use href="#c" x="1318" y="568"/><use href="#c" x="1344" y="568"/><use href="#c" x="1358" y="568"/><use href="#c" x="1265" y="582"/><use href="#c" x="1278" y="582"/><use href="#c" x="1291" y="582"/><use href="#c" x="1304" y="582"/><use href="#c" x="1318" y="582"/><use href="#c" x="1344" y="582"/><use href="#c" x="1358" y="582"/><use href="#c" x="1265" y="595"/><use href="#c" x="1278" y="595"/><use href="#c" x="1291" y="595"/><use href="#c" x="1304" y="595"/><use href="#c" x="1318" y="595"/><use href="#c" x="1344" y="595"/><use href="#c" x="1358" y="595"/><use href="#c" x="1278" y="608"/><use href="#c" x="1291" y="622"/><use href="#c" x="1304" y="622"/><use href="#c" x="1318" y="622"/><use href="#c" x="1344" y="622"/><use href="#c" x="1358" y="622"/><use href="#c" x="1371" y="622"/><use href="#c" x="1291" y="635"/><use href="#c" x="1304" y="635"/><use href="#c" x="1318" y="635"/><use href="#c" x="1344" y="635"/><use href="#c" x="1358" y="635"/><use href="#c" x="1371" y="635"/><use href="#c" x="1384" y="635"/><use href="#c" x="1291" y="648"/><use href="#c" x="1304" y="648"/><use href="#c" x="1318" y="648"/><use href="#c" x="1344" y="648"/><use href="#c" x="1358" y="648"/><use href="#c" x="1371" y="648"/><use href="#c" x="1384" y="648"/><use href="#c" x="1278" y="662"/><use href="#c" x="1291" y="662"/><use href="#c" x="1304" y="662"/><use href="#c" x="1318" y="662"/><use href="#c" x="1344" y="662"/><use href="#c" x="1358" y="662"/><use href="#c" x="1371" y="662"/><use href="#c" x="1384" y="662"/><use href="#c" x="1278" y="675"/><use href="#c" x="1291" y="675"/><use href="#c" x="1304" y="675"/><use href="#c" x="1318" y="675"/><use href="#c" x="1344" y="675"/><use href="#c" x="1358" y="675"/><use href="#c" x="1371" y="675"/><use href="#c" x="1384" y="675"/><use href="#c" x="1278" y="688"/><use href="#c" x="1291" y="688"/><use href="#c" x="1304" y="688"/><use href="#c" x="1318" y="688"/><use href="#c" x="1331" y="688"/><use href="#c" x="1344" y="688"/><use href="#c" x="1358" y="688"/><use href="#c" x="1371" y="688"/><use href="#c" x="1384" y="688"/><use href="#c" x="1278" y="701"/><use href="#c" x="1291" y="701"/><use href="#c" x="1304" y="701"/><use href="#c" x="1318" y="701"/><use href="#c" x="1331" y="701"/><use href="#c" x="1344" y="701"/><use href="#c" x="1358" y="701"/><use href="#c" x="1371" y="701"/><use href="#c" x="1384" y="701"/><use href="#c" x="1278" y="715"/><use href="#c" x="1291" y="715"/><use href="#c" x="1304" y="715"/><use href="#c" x="1318" y="715"/><use href="#c" x="1331" y="715"/><use href="#c" x="1344" y="715"/><use href="#c" x="1358" y="715"/><use href="#c" x="1371" y="715"/><use href="#c" x="1384" y="715"/><use href="#c" x="1278" y="728"/><use href="#c" x="1291" y="728"/><use href="#c" x="1304" y="728"/><use href="#c" x="1318" y="728"/><use href="#c" x="1331" y="728"/><use href="#c" x="1344" y="728"/><use href="#c" x="1358" y="728"/><use href="#c" x="1371" y="728"/><use href="#c" x="1384" y="728"/><use href="#c" x="1291" y="741"/><use href="#c" x="1304" y="741"/><use href="#c" x="1318" y="741"/><use href="#c" x="1331" y="741"/><use href="#c" x="1344" y="741"/><use href="#c" x="1358" y="741"/><use href="#c" x="1291" y="755"/><use href="#c" x="1304" y="755"/><use href="#c" x="1318" y="755"/><use href="#c" x="1331" y="755"/><use href="#c" x="1344" y="755"/><use href="#c" x="1358" y="755"/>
</g>
<path stroke="#0000ff" d="M1332.5 529.5 H1335.5 A5.3 5.3 0 1 1 1335.5 539.5 H1332.5 V543.5 M1332.5 543.5 H1335.5 A5.3 5.3 0 1 1 1335.5 553.5 H1332.5 V556.5 M1332.5 556.5 H1335.5 A5.3 5.3 0 1 1 1335.5 566.5 H1332.5 V569.5 M1332.5 569.5 H1335.5 A5.3 5.3 0 1 1 1335.5 579.5 H1332.5 V583.5 M1332.5 583.5 H1335.5 A5.3 5.3 0 1 1 1335.5 593.5 H1332.5 V596.5 M1332.5 596.5 H1335.5 A5.3 5.3 0 1 1 1335.5 606.5 H1332.5 V609.5 M1332.5 623.5 H1335.5 A5.3 5.3 0 1 1 1335.5 633.5 H1332.5 V636.5 M1332.5 636.5 H1335.5 A5.3 5.3 0 1 1 1335.5 646.5 H1332.5 V649.5 M1332.5 649.5 H1335.5 A5.3 5.3 0 1 1 1335.5 659.5 H1332.5 V663.5 M1332.5 663.5 H1335.5 A5.3 5.3 0 1 1 1335.5 673.5 H1332.5 V676.5 M1332.5 676.5 H1335.5 A5.3 5.3 0 1 1 1335.5 686.5 H1332.5 M1043.5 381.5 H1046.5 A5.3 5.3 0 1 1 1046.5 391.5 H1043.5 V394.5 M1043.5 394.5 H1046.5 A5.3 5.3 0 1 1 1046.5 404.5 H1043.5 V408.5 M1043.5 408.5 H1046.5 A5.3 5.3 0 1 1 1046.5 418.5 H1043.5 M1292.5 609.5 V612.5 A5.3 5.3 0 1 0 1302.5 612.5 V609.5 H1305.5 M1305.5 609.5 V612.5 A5.3 5.3 0 1 0 1315.5 612.5 V609.5 H1319.5 M1319.5 609.5 V612.5 A5.3 5.3 0 1 0 1329.5 612.5 V609.5 H1332.5 M1332.5 609.5 V612.5 A5.3 5.3 0 1 0 1342.5 612.5 V609.5 H1345.5 M1345.5 609.5 V612.5 A5.3 5.3 0 1 0 1355.5 612.5 V609.5 H1359.5 M1359.5 609.5 V612.5 A5.3 5.3 0 1 0 1369.5 612.5 V609.5"/>
<g fill="#0000ff" stroke="none">
<rect x="1332" y="533" width="2" height="2"/>
<rect x="1332" y="547" width="2" height="2"/>
<rect x="1332" y="560" width="2" height="2"/>
<rect x="1332" y="573" width="2" height="2"/>
<rect x="1332" y="587" width="2" height="2"/>
<rect x="1332" y="600" width="2" height="2"/>
<rect x="1332" y="613" width="2" height="2"/>
<rect x="1332" y="627" width="2" height="2"/>
<rect x="1332" y="640" width="2" height="2"/>
<rect x="1332" y="653" width="2" height="2"/>
<rect x="1332" y="667" width="2" height="2"/>
<rect x="1332" y="680" width="2" height="2"/>
<rect x="1043" y="385" width="2" height="2"/>
<rect x="1043" y="398" width="2" height="2"/>
<rect x="1043" y="412" width="2" height="2"/>
<rect x="1297" y="608" width="2" height="2"/>
<rect x="1310" y="608" width="2" height="2"/>
<rect x="1324" y="608" width="2" height="2"/>
<rect x="1337" y="608" width="2" height="2"/>
<rect x="1350" y="608" width="2" height="2"/>
<rect x="1364" y="608" width="2" height="2"/>
</g>
<path stroke="#0000ff" d="M818.6 193 L819.2 199 M818.6 243 L819.2 237 M823.4 193 L822.8 199 M823.4 243 L822.8 237 M819.4 201 L820 208 M819.4 235 L820 228 M822.6 201 L822 208 M822.6 235 L822 228 M820.2 210 L820.7 215 M820.2 226 L820.7 221 M821.8 210 L821.3 215 M821.8 226 L821.3 221 M562.5 175.5 L562.5 175.5 L561 179 L558 183 L554 186 L550.5 187.5 M562.5 175.5 L669.5 175.5 L669.5 302.5 L683.5 302.5 L683.5 311.5 M683.5 311.5 L683.5 312.1 L680 313.6 L676.8 315.8 L674.1 318.5 L671.9 321.6 L670.2 325 L669.2 328.7 L668.9 332.5 L669.2 336.3 L670.2 340 L671.9 343.4 L674.1 346.5 L676.8 349.2 L680 351.4 L683.5 352.9 L683.5 354 M683.5 354.5 L683.5 425.5 M550.5 187.5 L550.5 304.5 L567.5 304.5 L567.5 347.5 L585.5 347.5 L585.5 397.5 L550.5 397.5 L550.5 412.5 M550.5 412.5 L555 414 L559 417 L562 421 L563.5 425.5 M563.5 425.5 L615.5 425.5 M615.8 425.5 L617 419 L621 414 L627 410.5 L632 409.5 L644 409.5 L649 410.5 L654.5 414 L658 419 L659.5 425.5 M659.5 425.5 L683.5 425.5 M658.5 226.5 L658.5 330.5 M658.5 226.5 L664.5 232.5 M658.5 330.5 L653.5 324.5 M605.5 280.5 L715.5 280.5 M605.5 280.5 L608.5 277.5 M714.5 280.5 L709.5 286.5 M695.5 180.5 L700.5 186.5 M700.5 180.5 L695.5 186.5 M548.5 320.5 L552.5 326.5 M552.5 320.5 L548.5 326.5 M548.5 332.5 L552.5 337.5 M552.5 332.5 L548.5 337.5 M553.5 364.5 L569.5 381.5 M569.5 364.5 L553.5 381.5 M690.5 215 L697 228 M710.5 215 L704 228 M690.5 256 L699 239 M710.5 256 L702 239 M727.5 175.5 L800.5 175.5 L800.5 274.5 L727.5 274.5Z M712 290.5 L722 291.4 M812 290.5 L802 291.4 M712 299.4 L722 298.5 M812 299.4 L802 298.5 M728 291.9 L742 293.2 M796 291.9 L782 293.2 M728 298 L742 296.7 M796 298 L782 296.7 M746 293.5 L756 294.4 M778 293.5 L768 294.4 M746 296.4 L756 295.5 M778 296.4 L768 295.5 M709.5 316.5 L821.5 316.5 L821.5 323.5 L717.5 323.5 L717.5 319.5 L712.5 319.5 M709.5 316.5 L712.5 319.5 M698 339 L714.6 350.2 M720.4 354.1 L736.9 365.4 M742.7 369.3 L759.3 380.5 M825 339 L808.4 350.2 M802.6 354.1 L786.1 365.4 M780.3 369.3 L763.7 380.5 M698 425 L714.6 413.8 M720.4 409.9 L736.9 398.6 M742.7 394.7 L759.3 383.5 M825 425 L808.4 413.8 M802.6 409.9 L786.1 398.6 M780.3 394.7 L763.7 383.5 M858.5 373.5 L1057.5 373.5 L1057.5 425.5 L840.5 425.5 L840.5 418.5 L844.5 418.5 L844.5 384.5 M844.5 384 L851.5 377.5 M851.5 377.5 L858.5 377.5 L858.5 373.5 M942.5 397.5 L1146.5 397.5 M942.5 397.5 L945.5 394.5 M1146.5 397.5 L1142.5 401.5 M1129.5 373.5 L1226.5 373.5 M1226.5 373.5 L1228 378 L1232 382.5 L1238 386.5 M1238.5 386.5 L1247.5 386.5 L1247.5 425.5 L1135.5 425.5 L1135.5 417.5 L1133.5 417.5 L1133.5 411.5 L1129.5 411.5 L1129.5 373.5 M395.5 347.5 L400.5 353.5 M400.5 347.5 L395.5 353.5 M526.3 350 L527.3 359.2 M526.3 427 L527.3 417.8 M534.6 350 L533.6 359.2 M534.6 427 L533.6 417.8 M527.6 362.3 L528.8 373.1 M527.6 414.7 L528.8 403.9 M533.3 362.3 L532.1 373.1 M533.3 414.7 L532.1 403.9 M529.1 376.2 L530 383.9 M529.1 400.8 L530 393.1 M531.8 376.2 L530.9 383.9 M531.8 400.8 L530.9 393.1 M417.5 342.5 L510.5 342.5 L510.5 429.5 L509.5 429.5 L509.5 455.5 L515.5 455.5 L515.5 461.5 L522.5 461.5 L522.5 467.5 L485.5 467.5 L485.5 574.5 L454.5 574.5 L454.5 614.5 L494.5 614.5 L494.5 595.5 L526.5 595.5 M417.5 342.5 L417.5 369.5 L390.5 369.5 L390.5 602.5 M390.5 602.5 L393 604 L398 606.5 L402 611 L405 616 L406.5 622 L406.5 628 L405 634 L402 639 L398 643.5 L393 646.5 L390.5 647.5 M390.5 647.5 L390.5 758.5 M390.5 758.5 L397 759.5 L402 762.5 L406 766.5 L410 771.5 M410.5 771.5 L512.5 771.5 L512.5 735.5 L535.5 735.5 M535.5 455.5 L535.5 588.5 M535.5 659.5 L535.5 735.5 M396.5 457.5 L396.5 662.5 M396.5 662 L393.5 666 M392.5 559.5 L401.5 559.5 M398.5 467.5 L439.5 467.5 L439.5 595.5 L398.5 595.5Z M526.5 467.5 L526.5 618.5 M526.5 467.5 L535.5 467.5 M527.5 500.5 L527.5 618.5 M523.5 559.5 L531.5 559.5 M531.5 588.5 L535.5 588.5 M531.5 588.5 L531.5 614.5 L528.5 614.5 M528 618.5 L525 622 L521.5 627 L520 633 L520 645 L521.5 650 L525 655 L528.5 659 M528.5 659.5 L528.5 664.5 L535.5 664.5 M414.4 486.4 L415.5 497.2 M414.4 576.2 L415.5 565.4 M423.5 486.4 L422.4 497.2 M423.5 576.2 L422.4 565.4 M415.9 500.8 L417.1 513.3 M415.9 561.8 L417.1 549.3 M422 500.8 L420.8 513.3 M422 561.8 L420.8 549.3 M417.5 516.9 L418.4 525.9 M417.5 545.7 L418.4 536.7 M420.4 516.9 L419.5 525.9 M420.4 545.7 L419.5 536.7 M501.7 486.4 L502.8 497.2 M501.7 576.2 L502.8 565.4 M510.7 486.4 L509.6 497.2 M510.7 576.2 L509.6 565.4 M503.1 500.8 L504.4 513.3 M503.1 561.8 L504.4 549.3 M509.3 500.8 L508 513.3 M509.3 561.8 L508 549.3 M504.8 516.9 L505.7 525.9 M504.8 545.7 L505.7 536.7 M507.6 516.9 L506.7 525.9 M507.6 545.7 L506.7 536.7 M470.5 590.5 L479.5 598.5 M479.5 590.5 L470.5 598.5 M462.5 453.5 L462.5 666.5 M462.5 666.5 L458.5 670.5 M448.5 559.5 L476.5 559.5 M448.5 559.5 L451 563 M476 559.5 L473 563.5 M571.5 440.5 L609.5 440.5 M666.5 440.5 L1003.5 440.5 M547.5 462.5 L547.5 588.5 L574.5 588.5 L574.5 623.5 L576.5 623.5 L576.5 635.5 M571.5 635.5 L1003.5 635.5 M571.5 440.5 L570.5 446 L567.5 452 L563 456.5 L557 460 L552 461.5 L547.5 462 M609 440.5 L610.5 446 L613.5 451 L618 455.5 L623 458.5 L629 460 L649 460 L654 458.5 L659 455 L663 451.5 M663.5 451.5 L672.5 451.5 L672.5 441.5 M1003.5 440.5 L1003.5 477.5 L1004.5 477.5 L1004.5 560.5 L1003.5 560.5 L1003.5 635.5 M548.5 604.5 L558.5 616.5 M558.5 604.5 L548.5 616.5 M984.5 528.5 L991.5 533.5 M991.5 528.5 L984.5 533.5 M664.5 537.5 L895.5 537.5 M664.5 537.5 L668.5 531.5 M895.5 537.5 L890.5 544.5 M780.5 490.5 L780.5 585.5 M780.5 490.5 L785 495.5 M780.5 585 L776.5 581 M1021.4 464.4 L1023 480.2 M1021.4 596.4 L1023 580.6 M1034.4 464.4 L1032.8 480.2 M1034.4 596.4 L1032.8 580.6 M1023.5 485.5 L1025.3 504 M1023.5 575.3 L1025.3 556.8 M1032.3 485.5 L1030.5 504 M1032.3 575.3 L1030.5 556.8 M1025.8 509.3 L1027.1 522.5 M1025.8 551.5 L1027.1 538.3 M1030 509.3 L1028.7 522.5 M1030 551.5 L1028.7 538.3 M1052.5 440.5 L1052.5 635.5 M1057.5 440.5 L1057.5 456.5 L1084.5 456.5 M1085 456.5 L1090 462 M1090.5 462.5 L1090.5 464.5 L1100.5 464.5 M1100.5 462.5 L1100.5 520.5 M1098.5 490.5 L1098.5 585.5 M1066.5 490.5 L1066.5 592.5 M1066 592 L1062 588 M1071.5 520.5 L1100.5 520.5 M1071.5 520.5 L1071.5 623.5 L1062.5 623.5 L1062.5 635.5 M1055.5 537.5 L1074.5 537.5 M1087.4 546 L1088.4 555.4 M1087.4 624 L1088.4 614.6 M1095.7 546 L1094.7 555.4 M1095.7 624 L1094.7 614.6 M1088.7 558.5 L1089.9 569.4 M1088.7 611.5 L1089.9 600.6 M1094.4 558.5 L1093.2 569.4 M1094.4 611.5 L1093.2 600.6 M1090.2 572.5 L1091.1 580.3 M1090.2 597.5 L1091.1 589.7 M1092.9 572.5 L1092 580.3 M1092.9 597.5 L1092 589.7 M571.5 646.5 L1060.5 646.5 M571.5 646.5 L570.5 652 L567.5 658 L563 662.5 L557 666 L552 667.5 L547.5 668.5 M547.5 668.5 L547.5 735.5 L567.5 735.5 L567.5 744.5 L697.5 744.5 L697.5 739.5 M697.5 739.5 L701.5 734.5 M701.5 734.5 L701.5 721.5 L754.5 721.5 L754.5 743.5 M754.5 743.5 L755.5 744.5 M755.5 744.5 L861.5 744.5 L861.5 720.5 L913.5 720.5 L913.5 733.5 M913.9 733.7 L918.4 737.4 M918.5 737.5 L918.5 744.5 L1033.5 744.5 L1033.5 720.5 L1074.5 720.5 L1074.5 726.5 M1074.5 726 L1080 728.5 L1085 732 L1089 737.5 L1091.5 744.5 M1091.5 744.5 L1122.5 744.5 L1122.5 667.5 M1122.5 667.5 L1120 669 L1117 670.5 M1116.5 670.5 L1094.5 670.5 M1094.5 670.5 L1089 668 L1084 664 L1081 660 L1079.5 657 M1079.5 657.5 L1060.5 657.5 L1060.5 646.5 M694.5 697.5 L980.5 697.5 M694.5 697.5 L690.5 693.5 M980.5 697.5 L976.5 701.5 M836.5 674.5 L836.5 722.5 M836.5 674.5 L832.5 671.5 M836.5 722 L832.5 718 M1129.5 425.5 L1247.5 425.5 M1206.5 440.5 L1249.5 440.5 M1111.5 456.5 L1129.5 456.5 L1129.5 448.5 L1143.5 448.5 L1143.5 441.5 M1111.5 456.5 L1111.5 614.5 L1119.5 614.5 L1119.5 619.5 M1119.5 619 L1122 622 L1125 626.5 M1125.5 626.5 L1142.5 626.5 L1142.5 631.5 L1232.5 631.5 M1232.5 631 L1234.5 626 L1238 621.5 L1243 618.5 L1249.5 617.5 M1249.5 617.5 L1249.5 440.5 M1150.5 440.5 L1150.5 480.5 L1206.5 480.5 L1206.5 440.5 M1166.5 441.5 L1190.5 464.5 M1190.5 441.5 L1166.5 464.5 M1118.5 548.5 L1156.5 548.5 L1156.5 586.5 L1118.5 586.5Z M1134.5 564.5 L1139.5 570.5 M1139.5 564.5 L1134.5 570.5 M1180.5 503.5 L1180.5 576.5 M1180.5 576 L1177 572 M1180.5 503 L1184 506 M1146.5 540.5 L1215.5 540.5 M1146.5 540 L1150.5 535.5 M1215 540 L1211 545 M1261.5 444.5 L1388.5 444.5 L1388.5 454.5 M1388.5 454.5 L1392 459 L1397 462.5 L1401.5 464.5 M1401.5 464.5 L1401.5 570.5 L1377.5 570.5 L1377.5 608.5 L1388.5 608.5 L1388.5 619.5 M1388.8 619 L1392 623 L1396 625.7 L1401.5 628 M1401.5 628.5 L1401.5 751.5 L1377.5 751.5 L1377.5 771.5 L1285.5 771.5 L1285.5 745.5 L1264.5 745.5 L1264.5 664.5 M1264.5 664 L1272 660 M1261.5 444.5 L1261.5 617.5 M1261.5 617.5 L1267 618.5 L1272 621.5 L1276 626.5 L1278.5 633 L1278.5 647 L1276.5 653 L1272 658 L1267 661.5 L1264.5 663 M1394.5 586.5 L1399.5 592.5 M1399.5 586.5 L1394.5 592.5 M1394.5 767.5 L1399.5 773.5 M1399.5 767.5 L1394.5 773.5"/>
<path stroke="#0000ff" stroke-width="2" d="M818 178 L818 190 M818 245 L818 258 M825 178 L825 190 M825 245 L825 258 M821.5 215.5 L821.5 217.5 M821.5 219 L821.5 221 M703 289.5 L715 289.5 M808 289.5 L819 289.5 M703 300.5 L715 300.5 M808 300.5 L819 300.5 M757 294.5 L764 294.5 M526.5 345 L526.5 356 M526.5 421 L526.5 432 M534.5 345 L534.5 356 M534.5 421 L534.5 432 M530.5 384.6 L530.5 387.7 M530.5 390 L530.5 393.1 M418.5 526.8 L418.5 530.4 M418.5 533.1 L418.5 536.7 M506.5 526.8 L506.5 530.4 M506.5 533.1 L506.5 536.7 M571 634.5 L577 634.5 M666 441 L673 441 M983 527 H993 V535 H983Z M1027.5 523.8 L1027.5 529.1 M1027.5 533 L1027.5 538.3 M1062 634.5 L1072 634.5 M1087.5 541 L1087.5 552 M1095.5 541 L1095.5 552 M1087.5 618 L1087.5 629 M1095.5 618 L1095.5 629 M1091.5 581.1 L1091.5 584.2 M1091.5 586.6 L1091.5 589.7 M1060 646.5 L1072 646.5 M1129 441 L1143 441"/>
<path stroke="#000" d="M547.5 160.5 L825.5 160.5 M547.5 172.5 L825.5 172.5 M535.5 172.5 L535.5 327.5 L375.5 327.5 L375.5 786.5 M547.5 172.5 L547.5 425.5 M836.5 172.5 L836.5 425.5 M826.5 172.5 L826.5 425.5 M808.5 172.5 L808.5 270.5 L826.5 270.5 M808.5 263.5 L826.5 263.5 M808.5 164.5 L808.5 167.5 M808.5 170.5 L808.5 171.5 M816.5 164.5 L816.5 167.5 M816.5 170.5 L816.5 171.5 M828.5 263.5 L832.5 263.5 M828.5 270.5 L832.5 270.5 M828.5 282.5 L832.5 282.5 M828.5 289.5 L832.5 289.5 M828.5 300.5 L832.5 300.5 M828.5 308.5 L832.5 308.5 M828.5 327.5 L832.5 327.5 M828.5 338.5 L832.5 338.5 M816.5 172.5 L816.5 270.5 M694.5 179.5 L701.5 179.5 L701.5 187.5 L694.5 187.5Z M547.5 319.5 L553.5 319.5 L553.5 327.5 L547.5 327.5Z M547.5 331.5 L553.5 331.5 L553.5 338.5 L547.5 338.5Z M552.5 363.5 L570.5 363.5 L570.5 382.5 L552.5 382.5Z M681.5 206.5 L719.5 206.5 L719.5 265.5 L681.5 265.5Z M681.5 213.5 L719.5 213.5 M681.5 257.5 L719.5 257.5 M689.5 213.5 L689.5 257.5 M711.5 213.5 L711.5 257.5 M689.5 208.5 L689.5 210.5 M711.5 208.5 L711.5 210.5 M689.5 259.5 L689.5 261.5 M689.5 264.5 L689.5 265.5 M711.5 259.5 L711.5 261.5 M711.5 264.5 L711.5 265.5 M689.5 282.5 L826.5 282.5 L826.5 308.5 L689.5 308.5Z M697.5 282.5 L697.5 308.5 M697.5 289.5 L826.5 289.5 M697.5 300.5 L826.5 300.5 M690.5 289.5 L693.5 289.5 M695.5 289.5 L697.5 289.5 M690.5 300.5 L693.5 300.5 M695.5 300.5 L697.5 300.5 M697.5 327.5 L826.5 327.5 M697.5 338.5 L826.5 338.5 M686.5 338.5 L686.5 425.5 M697.5 338.5 L697.5 425.5 M547.5 425.5 L1129.5 425.5 M686.5 427.5 L686.5 431.5 M686.5 434.5 L686.5 438.5 M697.5 427.5 L697.5 431.5 M697.5 434.5 L697.5 438.5 M825.5 427.5 L825.5 431.5 M825.5 434.5 L825.5 438.5 M836.5 427.5 L836.5 431.5 M836.5 434.5 L836.5 438.5 M836.5 358.5 L1262.5 358.5 L1262.5 444.5 M836.5 370.5 L1249.5 370.5 L1249.5 425.5 M1253.5 425.5 L1257.5 425.5 M1260.5 425.5 L1262.5 425.5 M1253.5 440.5 L1257.5 440.5 M1260.5 440.5 L1262.5 440.5 M1249.5 425.5 L1249.5 440.5 M386.5 338.5 L525.5 338.5 M386.5 338.5 L386.5 775.5 M386.5 775.5 L535.5 775.5 M375.5 786.5 L547.5 786.5 M525.5 338.5 L525.5 438.5 L535.5 438.5 M525.5 338.5 L535.5 338.5 M535.5 338.5 L535.5 455.5 M394.5 346.5 L401.5 346.5 L401.5 354.5 L394.5 354.5Z M535.5 588.5 L535.5 659.5 M535.5 735.5 L535.5 775.5 M547.5 735.5 L547.5 786.5 M405.5 474.5 L432.5 474.5 L432.5 588.5 L405.5 588.5Z M405.5 482.5 L432.5 482.5 M405.5 580.5 L432.5 580.5 M413.5 482.5 L413.5 580.5 M424.5 482.5 L424.5 580.5 M413.5 475.5 L413.5 478.5 M413.5 481.5 L413.5 482.5 M424.5 475.5 L424.5 478.5 M424.5 481.5 L424.5 482.5 M413.5 581.5 L413.5 584.5 M413.5 587.5 L413.5 588.5 M424.5 581.5 L424.5 584.5 M424.5 587.5 L424.5 588.5 M492.5 474.5 L519.5 474.5 L519.5 588.5 L492.5 588.5Z M492.5 482.5 L519.5 482.5 M492.5 580.5 L519.5 580.5 M500.5 482.5 L500.5 580.5 M511.5 482.5 L511.5 580.5 M500.5 475.5 L500.5 478.5 M500.5 481.5 L500.5 482.5 M511.5 475.5 L511.5 478.5 M511.5 481.5 L511.5 482.5 M500.5 581.5 L500.5 584.5 M500.5 587.5 L500.5 588.5 M511.5 581.5 L511.5 584.5 M511.5 587.5 L511.5 588.5 M469.5 589.5 L480.5 589.5 L480.5 599.5 L469.5 599.5Z M547.5 440.5 L571.5 440.5 M609.5 440.5 L666.5 440.5 M1003.5 440.5 L1100.5 440.5 M547.5 440.5 L547.5 462.5 M547.5 588.5 L547.5 635.5 L571.5 635.5 M1003.5 635.5 L1250.5 635.5 M547.5 603.5 L559.5 603.5 L559.5 617.5 L547.5 617.5Z M1013.5 452.5 L1043.5 452.5 L1043.5 608.5 L1013.5 608.5Z M1013.5 460.5 L1043.5 460.5 M1013.5 600.5 L1043.5 600.5 M1020.5 460.5 L1020.5 600.5 M1035.5 460.5 L1035.5 600.5 M1020.5 453.5 L1020.5 456.5 M1020.5 459.5 L1020.5 460.5 M1035.5 453.5 L1035.5 456.5 M1035.5 459.5 L1035.5 460.5 M1020.5 601.5 L1020.5 604.5 M1020.5 607.5 L1020.5 608.5 M1035.5 601.5 L1035.5 604.5 M1035.5 607.5 L1035.5 608.5 M1100.5 440.5 L1100.5 462.5 M1100.5 520.5 L1100.5 635.5 M1086.5 635.5 L1086.5 535.5 L1096.5 535.5 L1096.5 635.5 M547.5 646.5 L571.5 646.5 M1071.5 646.5 L1250.5 646.5 M547.5 646.5 L547.5 668.5 M547.5 735.5 L547.5 760.5 M545.5 748.5 L1138.5 748.5 M545.5 760.5 L1138.5 760.5 M539.5 748.5 L542.5 748.5 M539.5 760.5 L542.5 760.5 M1126.5 646.5 L1126.5 748.5 M1138.5 646.5 L1138.5 760.5 M1126.5 637.5 L1126.5 641.5 M1126.5 644.5 L1126.5 646.5 M1138.5 637.5 L1138.5 641.5 M1138.5 644.5 L1138.5 646.5 M1126.5 750.5 L1126.5 754.5 M1126.5 757.5 L1126.5 760.5 M1111.5 440.5 L1129.5 440.5 M1143.5 440.5 L1206.5 440.5 M1111.5 440.5 L1111.5 456.5 M1111.5 618.5 L1111.5 635.5 M1165.5 440.5 L1191.5 440.5 L1191.5 465.5 L1165.5 465.5Z M1133.5 563.5 L1140.5 563.5 L1140.5 571.5 L1133.5 571.5Z M1126.5 646.5 L1126.5 748.5 M1126.5 638.5 L1126.5 642.5 M1126.5 645.5 L1126.5 646.5 M1138.5 638.5 L1138.5 642.5 M1138.5 645.5 L1138.5 646.5 M1261.5 429.5 L1415.5 429.5 L1415.5 786.5 L1249.5 786.5 L1249.5 647.5 M1261.5 775.5 L1404.5 775.5 M1404.5 448.5 L1404.5 775.5 M1388.5 444.5 L1404.5 444.5 M1261.5 647.5 L1261.5 775.5 M1249.5 618.5 L1249.5 635.5 M1261.5 618.5 L1261.5 635.5 M1393.5 585.5 L1400.5 585.5 L1400.5 593.5 L1393.5 593.5Z M1393.5 766.5 L1400.5 766.5 L1400.5 774.5 L1393.5 774.5Z"/>
<path stroke="#ffee00" d="M816.5 173.5 L816.5 178.5 M825.5 173.5 L825.5 178.5 M816.5 258.5 L816.5 263.5 M825.5 258.5 L825.5 263.5 M698.5 289.5 L703.5 289.5 M698.5 300.5 L703.5 300.5 M820.5 289.5 L825.5 289.5 M820.5 300.5 L825.5 300.5 M525.5 339.5 L525.5 344.5 M535.5 339.5 L535.5 344.5 M525.5 433.5 L525.5 438.5 M535.5 433.5 L535.5 438.5 M413.5 483.5 L413.5 486.5 M424.5 483.5 L424.5 486.5 M413.5 576.5 L413.5 579.5 M424.5 576.5 L424.5 579.5 M500.5 483.5 L500.5 486.5 M511.5 483.5 L511.5 486.5 M500.5 576.5 L500.5 579.5 M511.5 576.5 L511.5 579.5 M1020.5 461.5 L1020.5 464.5 M1035.5 461.5 L1035.5 464.5 M1020.5 596.5 L1020.5 599.5 M1035.5 596.5 L1035.5 599.5 M1086.5 536.5 L1086.5 541.5 M1096.5 536.5 L1096.5 541.5 M1086.5 630.5 L1086.5 635.5 M1096.5 630.5 L1096.5 635.5"/>
<path stroke="#008000" d="M535.5 160.5 L547.5 160.5 L547.5 172.5 L535.5 172.5Z M825.5 160.5 L836.5 160.5 L836.5 172.5 L825.5 172.5Z M686.5 327.5 L697.5 327.5 L697.5 338.5 L686.5 338.5Z M825.5 358.5 L836.5 358.5 L836.5 370.5 L825.5 370.5Z M632.5 425.5 L643.5 425.5 L643.5 436.5 L632.5 436.5Z M536.5 427.5 L547.5 427.5 L547.5 438.5 L536.5 438.5Z M1075.5 358.5 L1090.5 358.5 L1090.5 370.5 L1075.5 370.5Z M1242.5 358.5 L1253.5 358.5 L1253.5 370.5 L1242.5 370.5Z M1100.5 427.5 L1111.5 427.5 L1111.5 438.5 L1100.5 438.5Z M382.5 327.5 L394.5 327.5 L394.5 338.5 L382.5 338.5Z M379.5 619.5 L390.5 619.5 L390.5 631.5 L379.5 631.5Z M382.5 775.5 L394.5 775.5 L394.5 786.5 L382.5 786.5Z M535.5 775.5 L547.5 775.5 L547.5 786.5 L535.5 786.5Z M536.5 633.5 L548.5 633.5 L548.5 644.5 L536.5 644.5Z M1100.5 635.5 L1111.5 635.5 L1111.5 646.5 L1100.5 646.5Z M720.5 748.5 L732.5 748.5 L732.5 760.5 L720.5 760.5Z M884.5 748.5 L895.5 748.5 L895.5 760.5 L884.5 760.5Z M1056.5 748.5 L1068.5 748.5 L1068.5 760.5 L1056.5 760.5Z M1248.5 634.5 L1262.5 634.5 L1262.5 647.5 L1248.5 647.5Z M1404.5 436.5 L1415.5 436.5 L1415.5 448.5 L1404.5 448.5Z M1404.5 601.5 L1415.5 601.5 L1415.5 612.5 L1404.5 612.5Z M1251.5 775.5 L1263.5 775.5 L1263.5 786.5 L1251.5 786.5Z M1404.5 775.5 L1415.5 775.5 L1415.5 786.5 L1404.5 786.5Z"/>
</svg>
<svg class="abs" style="left:0;top:0" width="1487" height="32" viewBox="0 0 1487 32" fill="none"><defs><linearGradient id="ai" x1="0" y1="0" x2="0" y2="1"><stop offset="0" stop-color="#e01830"/><stop offset="1" stop-color="#a01020"/></linearGradient></defs><rect x="9" y="7" width="16" height="16" rx="1" fill="url(#ai)"/><path d="M14 10.5 H22 L20.5 12.5 H12.5Z M13 13.5 H20.5 L19.5 16 H12Z M14 17 H21.5 L20 19.5 H12.5Z" fill="#f4ffff"/><path d="M15 13.5 h4 v2 h-4z M14.5 16.5 h3 v2 h-3z" fill="#606060" opacity=".7"/><path d="M1367 15.5 H1377" stroke="#8a8a8a" stroke-width="1"/><rect x="1412.5" y="10.5" width="9" height="9" stroke="#8a8a8a" stroke-width="1"/><path d="M1458 10 L1468 20 M1468 10 L1458 20" stroke="#8a8a8a" stroke-width="1.1"/></svg>
<div id="panel"><div class="ph"></div><div class="grip"></div><div class="abs" style="left:217px;top:8px;width:19px;height:18px;background:#e6e6e6"></div></div>
<span class="abs" style="left:73.0px;top:253.5px;font-size:12.5px;letter-spacing:-0.61px;color:#9a9a9a;white-space:nowrap;line-height:1;">Losas aligeradas</span>
<span class="abs" style="left:288.0px;top:255.0px;font-size:11px;letter-spacing:-0.85px;color:#d0d0d0;white-space:nowrap;line-height:1;">×</span>
<span class="abs" style="left:104.0px;top:281.5px;font-size:13.5px;letter-spacing:-0.08px;color:#1e1e1e;white-space:nowrap;line-height:1;">Introducir losas aligeradas</span>
<span class="abs" style="left:104.0px;top:307.5px;font-size:13.5px;letter-spacing:-0.11px;color:#1e1e1e;white-space:nowrap;line-height:1;">Generar aligeradores</span>
<span class="abs" style="left:104.0px;top:333.5px;font-size:13.5px;letter-spacing:0.04px;color:#1e1e1e;white-space:nowrap;line-height:1;">Mover el punto de paso</span>
<span class="abs" style="left:104.0px;top:359.5px;font-size:13.5px;letter-spacing:-0.31px;color:#1e1e1e;white-space:nowrap;line-height:1;">Generar zonas macizadas</span>
<span class="abs" style="left:104.0px;top:385.5px;font-size:13.5px;letter-spacing:-0.26px;color:#1e1e1e;white-space:nowrap;line-height:1;">Zona macizada - Rectángulo</span>
<span class="abs" style="left:104.0px;top:411.5px;font-size:13.5px;letter-spacing:-0.27px;color:#1e1e1e;white-space:nowrap;line-height:1;">Zona macizada - Círculo</span>
<span class="abs" style="left:104.0px;top:437.5px;font-size:13.5px;letter-spacing:-0.20px;color:#1e1e1e;white-space:nowrap;line-height:1;">Zona macizada - Polígono</span>
<span class="abs" style="left:104.0px;top:463.5px;font-size:13.5px;letter-spacing:-0.23px;color:#1e1e1e;white-space:nowrap;line-height:1;">Zona macizada - Segmento</span>
<span class="abs" style="left:104.0px;top:489.5px;font-size:13.5px;letter-spacing:-0.27px;color:#1e1e1e;white-space:nowrap;line-height:1;">Zona macizada - Punto</span>
<span class="abs" style="left:104.0px;top:515.5px;font-size:13.5px;letter-spacing:-0.16px;color:#1e1e1e;white-space:nowrap;line-height:1;">Zona aligerada - Rectángulo</span>
<span class="abs" style="left:104.0px;top:541.5px;font-size:13.5px;letter-spacing:-0.10px;color:#1e1e1e;white-space:nowrap;line-height:1;">Zona aligerada - Polígono</span>
<span class="abs" style="left:104.0px;top:567.5px;font-size:13.5px;letter-spacing:-0.20px;color:#1e1e1e;white-space:nowrap;line-height:1;">Borrar zonas</span>
<span class="abs" style="left:104.0px;top:593.5px;font-size:13.5px;letter-spacing:-0.07px;color:#1e1e1e;white-space:nowrap;line-height:1;">Datos de paño</span>
<span class="abs" style="left:104.0px;top:619.5px;font-size:13.5px;letter-spacing:-0.08px;color:#1e1e1e;white-space:nowrap;line-height:1;">Ver refuerzo de cortante</span>
<span class="abs" style="left:104.0px;top:645.5px;font-size:13.5px;letter-spacing:-0.04px;color:#1e1e1e;white-space:nowrap;line-height:1;">Ver aligeradores 'eliminados'</span>
<svg class="abs" style="left:0;top:0" width="320" height="700" viewBox="0 0 320 700" fill="none"><g transform="translate(83,280)"><path d="M4.5 0.5 H11 Q15.5 0.5 15.5 5 V7 M8 14.5 H4.5 Q0.5 14.5 0.5 10.5 V4.5 Q0.5 0.5 4.5 0.5" stroke="#1a2040" stroke-width="1.2" fill="none"/><circle cx="11.5" cy="11" r="3.6" fill="#fff" stroke="#20a060" stroke-width="1.2"/><path d="M11.5 9 V13 M9.5 11 H13.5" stroke="#20a060" stroke-width="1.3"/></g><g transform="translate(83,306)"><path d="M4.5 0.5 H11 Q15.5 0.5 15.5 5 V7 M8 14.5 H4.5 Q0.5 14.5 0.5 10.5 V4.5 Q0.5 0.5 4.5 0.5" stroke="#1a2040" stroke-width="1.2" fill="none"/><path d="M11.5 7 V15 M7.5 11 H15.5 M8.7 8.2 L14.3 13.8 M14.3 8.2 L8.7 13.8" stroke="#101020" stroke-width="1.5"/></g><g transform="translate(83,332)"><path d="M4.5 0.5 H11 Q15.5 0.5 15.5 5 M15.5 10 Q15.5 14.5 11 14.5 M8 14.5 H4.5 Q0.5 14.5 0.5 10.5 M0.5 5 Q0.5 0.5 4.5 0.5" stroke="#1a2040" stroke-width="1.2" fill="none"/><path d="M0 7.5 H16 M10.5 0 V15" stroke="#2040d0" stroke-width="1.6"/></g><g transform="translate(83,358)"><path d="M4.5 0.5 H11 Q15.5 0.5 15.5 5 V7 H8 V14.5 H4.5 Q0.5 14.5 0.5 10.5 V4.5 Q0.5 0.5 4.5 0.5Z" fill="#c8eeff" stroke="#40c8f0" stroke-width="1.1"/><path d="M11.5 7 V15 M7.5 11 H15.5 M8.7 8.2 L14.3 13.8 M14.3 8.2 L8.7 13.8" stroke="#101020" stroke-width="1.5"/></g><g transform="translate(83,384)"><path d="M4.5 0.5 H11 Q15.5 0.5 15.5 5 V14.5 H15.5 V14.5 H4.5 Q0.5 14.5 0.5 10.5 V4.5 Q0.5 0.5 4.5 0.5Z" fill="#c8eeff" stroke="#40c8f0" stroke-width="1.1"/><rect x="6.5" y="5.5" width="8" height="8" fill="#fff" stroke="#30a060" stroke-width="1.1"/></g><g transform="translate(83,410)"><path d="M4.5 0.5 H11 Q15.5 0.5 15.5 5 V14.5 H15.5 V14.5 H4.5 Q0.5 14.5 0.5 10.5 V4.5 Q0.5 0.5 4.5 0.5Z" fill="#c8eeff" stroke="#40c8f0" stroke-width="1.1"/><circle cx="10.5" cy="9.5" r="4.2" fill="#fff" stroke="#30a060" stroke-width="1.1"/></g><g transform="translate(83,436)"><path d="M4.5 0.5 H11 Q15.5 0.5 15.5 5 V14.5 H15.5 V14.5 H4.5 Q0.5 14.5 0.5 10.5 V4.5 Q0.5 0.5 4.5 0.5Z" fill="#c8eeff" stroke="#40c8f0" stroke-width="1.1"/><path d="M10.5 5.5 L15 10 L13 13.5 H10 V11.5 H7.5 L6 10Z" fill="#fff" stroke="#30a060" stroke-width="1.1"/></g><g transform="translate(83,462)"><path d="M4.5 0.5 H11 Q15.5 0.5 15.5 5 V14.5 H11 V14.5 H4.5 Q0.5 14.5 0.5 10.5 V4.5 Q0.5 0.5 4.5 0.5Z" fill="#c8eeff" stroke="#40c8f0" stroke-width="1.1"/><rect x="10.5" y="0" width="5" height="15" fill="#f0f0f0"/><path d="M13.5 3 V12" stroke="#30a060" stroke-width="1.4"/><circle cx="13.5" cy="2.3" r="1.5" fill="#fff" stroke="#101020"/><circle cx="13.5" cy="12.7" r="1.5" fill="#fff" stroke="#101020"/></g><g transform="translate(83,488)"><path d="M4.5 0.5 H11 Q15.5 0.5 15.5 5 V14.5 H15.5 V14.5 H4.5 Q0.5 14.5 0.5 10.5 V4.5 Q0.5 0.5 4.5 0.5Z" fill="#c8eeff" stroke="#40c8f0" stroke-width="1.1"/><rect x="10.5" y="10" width="6" height="6" fill="#f0f0f0"/><circle cx="13.5" cy="12.7" r="1.5" fill="#fff" stroke="#101020"/></g><g transform="translate(83,514)"><path d="M4.5 0.5 H11 Q15.5 0.5 15.5 5 V7 M8 14.5 H4.5 Q0.5 14.5 0.5 10.5 V4.5 Q0.5 0.5 4.5 0.5" stroke="#1a2040" stroke-width="1.2" fill="none"/><rect x="6.5" y="5.5" width="8" height="8" fill="#fff" stroke="#30a060" stroke-width="1.1"/></g><g transform="translate(83,540)"><path d="M4.5 0.5 H11 Q15.5 0.5 15.5 5 V7 M8 14.5 H4.5 Q0.5 14.5 0.5 10.5 V4.5 Q0.5 0.5 4.5 0.5" stroke="#1a2040" stroke-width="1.2" fill="none"/><path d="M10.5 5.5 L15 10 L13 13.5 H10 V11.5 H7.5 L6 10Z" fill="#fff" stroke="#30a060" stroke-width="1.1"/></g><g transform="translate(83,567)"><path d="M2 1.5 L13 12.5 M13 1.5 L2 12.5" stroke="#e8203c" stroke-width="2.6"/></g><g transform="translate(83,592)"><path d="M3 0.5 H13 Q15.5 0.5 15.5 3 V8 Q15.5 10.5 13 10.5 H11 L7.5 14 V10.5 H3 Q0.5 10.5 0.5 8 V3 Q0.5 0.5 3 0.5Z" fill="#fff" stroke="#1a2040" stroke-width="1.2"/><path d="M3.5 3.5 H12.5 M3.5 5.5 H12.5 M3.5 7.5 H12.5" stroke="#1a2040" stroke-width="1"/></g><g transform="translate(83,618)"><path d="M2.5 2.5 H13 M2.5 2.5 V12.5 H7" stroke="#1a2040" stroke-width="1" fill="none" stroke-dasharray="2 1.2"/><path d="M13 2.5 V6" stroke="#1a2040"/><circle cx="2.5" cy="2.5" r="1.6" fill="#fff" stroke="#1a2040"/><circle cx="13" cy="2.5" r="1.6" fill="#fff" stroke="#1a2040"/><circle cx="2.5" cy="12.5" r="1.6" fill="#fff" stroke="#1a2040"/><path d="M5 10 Q10 4.5 15.5 10 Q10 15.5 5 10Z" fill="#fff" stroke="#1a2040" stroke-width="1.1"/><circle cx="10.3" cy="10" r="2" fill="#1a2040"/><path d="M9 14.5 L11 13.5" stroke="#1a2040"/></g><g transform="translate(83,644)"><path d="M0.5 0 V16 M4.5 0 V16 M8.5 0 V9 M12.5 0 V8 M0 2.5 H16 M0 6.5 H16 M0 10.5 H6 M0 14.5 H6" stroke="#40c8f0" stroke-width="1"/><path d="M6 11.5 Q11 7 16 11.5 Q11 16 6 11.5Z" fill="#fff" stroke="#1a2040" stroke-width="1"/><circle cx="11" cy="11.5" r="1.9" fill="#1a2040"/></g><path d="M68.5 277 H72 L76 282 L72 287 H68.5Z" fill="#e00010" stroke="#900000" stroke-width=".7"/><g transform="translate(282,279)"><path d="M1.5 2 Q0 4 0.5 8 Q1 11 3 13 L4.5 12 V2.5Z" fill="#fff" stroke="#000" stroke-width=".9"/><path d="M4.5 2.5 Q8 0 10 3.5 V13 Q8 10 4.5 12Z" fill="#fff" stroke="#000" stroke-width="1"/><path d="M10 3.5 L14.5 2.5 V12 L10 13Z" fill="#fff" stroke="#000" stroke-width="1"/><path d="M3 13 Q8 11 10 13.5 L14.5 12.3" stroke="#008080" stroke-width="1.6" fill="none"/></g><defs><radialGradient id="hp" cx=".4" cy=".3" r=".8"><stop offset="0" stop-color="#6aa0ff"/><stop offset="1" stop-color="#0a30c8"/></radialGradient></defs><circle cx="290" cy="309" r="7.6" fill="#e8e8f0" stroke="#9098b0" stroke-width=".8"/><circle cx="290" cy="309" r="6" fill="url(#hp)"/><text x="290" y="313.2" font-family="Liberation Sans" font-weight="bold" font-size="11.5" text-anchor="middle" fill="#fff">?</text></svg>
<div id="tabs"></div><div id="status"></div>
<svg class="abs" style="left:0;top:820" width="1487" height="47" viewBox="0 820 1487 47" fill="none"><rect x="1" y="825" width="1485" height="42" fill="#f0f0f0"/><path d="M134 825 L149.5 842.5 H256 L268.5 825Z" fill="#fff" stroke="none"/><path d="M1 825.5 H134 M268.5 825.5 H1486" stroke="#000" stroke-width="1"/><path d="M3 826 L18.5 842.5 H133 L141.5 832 M134 825.5 L149.5 842.5 H256 L268.5 825.5 M265.5 830.5 L273.5 842.5 H343 L350.5 832 M344 825.5 L359 842.5 H426 L439 825.5" stroke="#000" stroke-width="1"/><path d="M1 845.5 H1486" stroke="#dcdcdc"/><rect x="0" y="865" width="1487" height="2" fill="#ababab"/><path d="M385 866.5 H1170" stroke="#4a4a50" stroke-dasharray="2 3 2 4 2 9 2 3 2 3 2 3 2 8"/></svg>
<span class="abs" style="left:22.0px;top:828.0px;font-size:13.5px;letter-spacing:-0.18px;color:#000;white-space:nowrap;line-height:1;">Entrada de pilares</span>
<span class="abs" style="left:153.0px;top:828.0px;font-size:13.5px;letter-spacing:-0.25px;color:#000;white-space:nowrap;line-height:1;">Entrada de vigas</span>
<span class="abs" style="left:275.0px;top:828.0px;font-size:13.5px;letter-spacing:-0.43px;color:#000;white-space:nowrap;line-height:1;">Resultados</span>
<span class="abs" style="left:363.0px;top:828.0px;font-size:13.5px;letter-spacing:-0.32px;color:#000;white-space:nowrap;line-height:1;">Isovalores</span>
<span class="abs" style="left:9.0px;top:850.0px;font-size:13.5px;letter-spacing:-0.27px;color:#000;white-space:nowrap;line-height:1;">Paños - Losas aligeradas</span>
<span class="abs" style="left:1303.5px;top:850.5px;font-size:12.5px;letter-spacing:-0.90px;color:#000;white-space:nowrap;line-height:1;word-spacing:2px;">1: CUBIERTA</span>
</div></body></html>
